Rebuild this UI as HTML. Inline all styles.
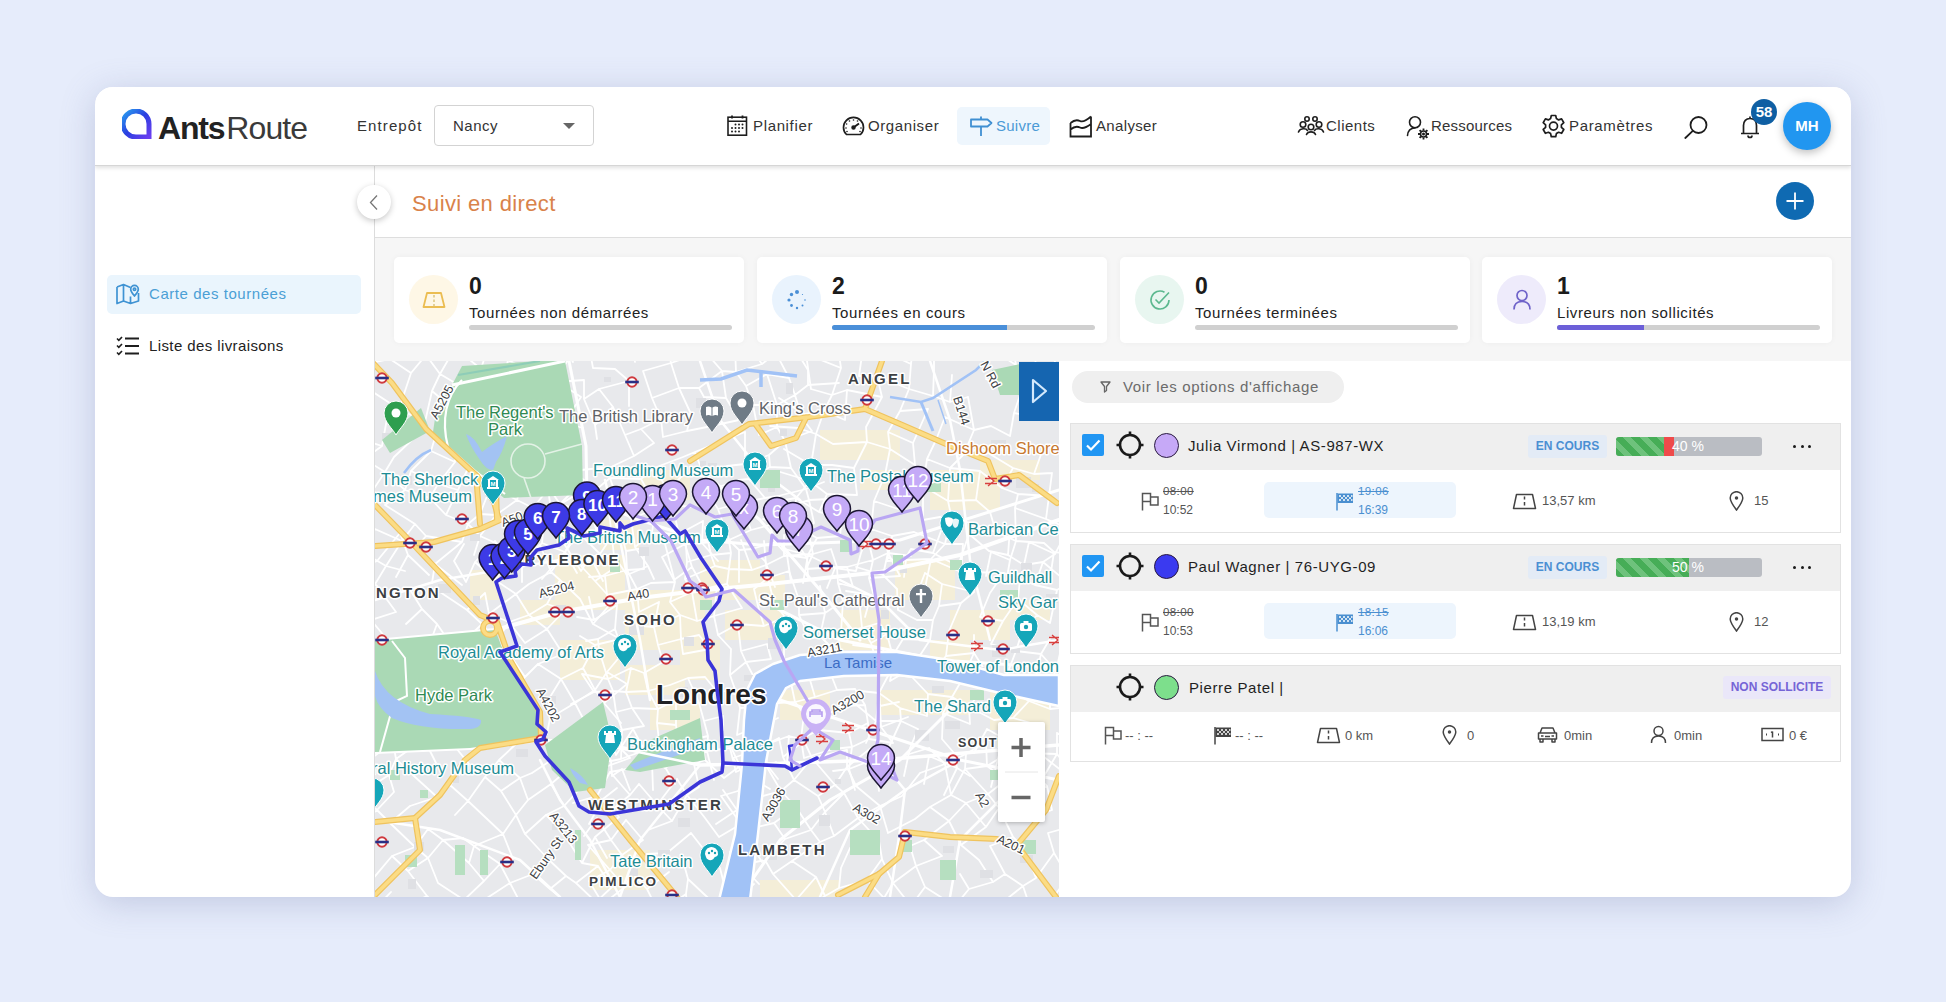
<!DOCTYPE html>
<html><head><meta charset="utf-8">
<style>
*{box-sizing:border-box;margin:0;padding:0}
html,body{width:1946px;height:1002px;overflow:hidden}
body{background:#e6ecfb;font-family:"Liberation Sans",sans-serif;color:#2b2b2b;position:relative}
.a{position:absolute}
.t{position:absolute;white-space:nowrap;line-height:1}
#card{position:absolute;left:95px;top:87px;width:1756px;height:810px;background:#fff;border-radius:18px;box-shadow:0 6px 34px rgba(110,120,170,.30);overflow:hidden}
#hdr{position:absolute;left:0;top:0;width:1756px;height:79px;background:#fff;border-bottom:1px solid #d6d6d6;box-shadow:0 2px 4px rgba(0,0,0,.12);z-index:5}
.nav{font-size:15px;color:#333;letter-spacing:.5px}

.stat{top:170px;width:350px;height:86px;background:#fff;border-radius:5px;box-shadow:0 0 6px rgba(0,0,0,.04)}
.stat .ic{position:absolute;left:15px;top:18px;width:49px;height:49px;border-radius:50%;display:flex;align-items:center;justify-content:center}
.stat .num{position:absolute;left:75px;top:18px;font-size:23px;font-weight:700;color:#1b1b1b;line-height:1}
.stat .lbl{position:absolute;left:75px;top:48px;font-size:15px;color:#222;letter-spacing:.6px;line-height:1;white-space:nowrap}
.stat .bar{position:absolute;left:75px;top:68px;width:263px;height:5px;border-radius:3px;background:#d0d0d0;overflow:hidden}
.stat .bar i{position:absolute;left:0;top:0;height:5px}

.rc{position:absolute;left:975px;width:771px;height:110px;border:1px solid #e2e2e2;background:#fff}
.rh{position:absolute;left:0;top:0;width:769px;height:46px;background:#efefef}
.cb{position:absolute;left:11px;top:10px;width:22px;height:22px;border-radius:2px;background:#2196f3}
.cb svg{display:block}
.dotc{width:25px;height:25px;border-radius:50%;border:1.5px solid #2a1a40}
.rn{font-size:15px;color:#1f1f1f;letter-spacing:.6px}
.badge{position:absolute;height:23px;border-radius:3px;background:#e3ebf6;color:#4a8fd3;font-weight:700;font-size:12px;line-height:23px;text-align:center}
.prog{position:absolute;top:13px;width:146px;height:19px;border-radius:3px;background:#babdc3;overflow:hidden}
.prog i{position:absolute;top:0;height:19px}
.prog i.g{left:0;background:repeating-linear-gradient(45deg,#46ad57 0 6px,#6ec27c 6px 12px)}
.prog span{position:absolute;top:2px;font-size:14px;color:#fff;line-height:15px;white-space:nowrap}
.dots{position:absolute;left:722px;top:21px}
.dots i{float:left;width:3px;height:3px;border-radius:50%;background:#1a1a1a;margin-right:4.5px}
.tm{font-size:12px;color:#555}
.tm.s{font-size:11.5px;text-decoration:line-through;letter-spacing:.4px}
.hl{width:192px;height:36px;background:#edf5fd;border-radius:5px}
.kv{font-size:13px;color:#555}
</style></head><body>
<div id="card">
  <div id="hdr">
    <!-- logo -->
    <svg class="a" style="left:27px;top:22px" width="30" height="30" viewBox="0 0 30 30">
      <defs><linearGradient id="lg" x1="0" y1="0" x2="1" y2="1"><stop offset="0" stop-color="#2aa0f0"/><stop offset=".5" stop-color="#2a3fe0"/><stop offset="1" stop-color="#6a3ef0"/></linearGradient></defs>
      <path d="M14 28 A13 13 0 1 1 27 15 L27 28 Z" fill="none" stroke="url(#lg)" stroke-width="5" stroke-linejoin="miter"/>
    </svg>
    <div class="t" style="left:63px;top:25px;font-size:32px;color:#222"><b style="letter-spacing:-1.2px">Ants</b><span style="letter-spacing:-.9px;margin-left:2px;color:#3a3a3a">Route</span></div>
    <div class="t nav" style="left:262px;top:31px;letter-spacing:1.1px">Entrepôt</div>
    <div class="a" style="left:339px;top:18px;width:160px;height:41px;border:1px solid #d3d3d3;border-radius:4px"></div>
    <div class="t nav" style="left:358px;top:31px">Nancy</div>
    <svg class="a" style="left:468px;top:36px" width="12" height="7"><path d="M0 0H12L6 6Z" fill="#666"/></svg>
    <!-- center nav -->
    <div class="a" style="left:862px;top:20px;width:93px;height:38px;background:#eef6fd;border-radius:5px"></div>
    <div class="t nav" style="left:658px;top:31px;letter-spacing:.65px">Planifier</div>
    <div class="t nav" style="left:773px;top:31px;letter-spacing:.6px">Organiser</div>
    <div class="t nav" style="left:901px;top:31px;color:#4b9ad6;letter-spacing:.25px">Suivre</div>
    <div class="t nav" style="left:1001px;top:31px;letter-spacing:.35px">Analyser</div>
    <div class="t nav" style="left:1231px;top:31px;letter-spacing:.5px">Clients</div>
    <div class="t nav" style="left:1336px;top:31px;letter-spacing:.2px">Ressources</div>
    <div class="t nav" style="left:1474px;top:31px;letter-spacing:.65px">Paramètres</div>

    <!-- header icons -->
    <svg class="a" style="left:632px;top:28px" width="21" height="21" viewBox="0 0 21 21" fill="none" stroke="#1e1e1e" stroke-width="1.6">
      <rect x="1" y="2.2" width="18.5" height="18" />
      <path d="M1 6.2H19.5" /><path d="M5 0.5V3.5M15.5 0.5V3.5" stroke-width="1.8"/>
      <g fill="#1e1e1e" stroke="none"><circle cx="8.5" cy="9.5" r="1"/><circle cx="12" cy="9.5" r="1"/><circle cx="15.5" cy="9.5" r="1"/><circle cx="5" cy="13" r="1"/><circle cx="8.5" cy="13" r="1"/><circle cx="12" cy="13" r="1"/><circle cx="15.5" cy="13" r="1"/><circle cx="5" cy="16.5" r="1"/><circle cx="8.5" cy="16.5" r="1"/><circle cx="12" cy="16.5" r="1"/></g>
    </svg>
    <svg class="a" style="left:747px;top:29px" width="23" height="20" viewBox="0 0 23 20" fill="none" stroke="#1e1e1e" stroke-width="1.7">
      <path d="M4.5 18.5 A10 10 0 1 1 18.5 18.5 Z" stroke-linejoin="round"/>
      <path d="M11.5 11.5 L17 7.5" stroke-width="2"/><circle cx="11.5" cy="11.5" r="1.4" fill="#1e1e1e"/>
      <g fill="#1e1e1e" stroke="none"><circle cx="11.5" cy="4" r=".8"/><circle cx="7.5" cy="5" r=".8"/><circle cx="15.5" cy="5" r=".8"/><circle cx="4.6" cy="8" r=".8"/><circle cx="4" cy="12" r=".8"/><circle cx="19" cy="12" r=".8"/><circle cx="5" cy="15.5" r=".8"/><circle cx="18" cy="15.5" r=".8"/></g>
    </svg>
    <svg class="a" style="left:875px;top:28px" width="23" height="22" viewBox="0 0 23 22" fill="none" stroke="#3f8fd2" stroke-width="1.8">
      <path d="M1 4.5H17.5L21.5 8L17.5 11.5H1Z" stroke-linejoin="round"/><path d="M11 1.5V4.5M11 11.5V21"/>
    </svg>
    <svg class="a" style="left:974px;top:28px" width="24" height="23" viewBox="0 0 24 23" fill="none" stroke="#1e1e1e" stroke-width="1.8">
      <path d="M1.5 8V21.5H22V1.5 M1.5 8 C5 5,8 4.5,11 6 S18 5,22 1.5 M1.5 14.5 C5 11.5,8 11,11 12.5 S18 12,22 9" />
    </svg>
    <svg class="a" style="left:1202px;top:28px" width="28" height="21" viewBox="0 0 28 21" fill="none" stroke="#1e1e1e" stroke-width="1.6">
      <circle cx="10" cy="4" r="2.2"/><circle cx="18" cy="4" r="2.2"/>
      <circle cx="6" cy="9.5" r="2.8"/><circle cx="14" cy="12" r="2.8"/><circle cx="22" cy="9.5" r="2.8"/>
      <path d="M1.5 17 C3 13,9 13,10.5 15.5 M17.5 15.5 C19 13,25 13,26.5 17 M9.5 19.5 C11 16,17 16,18.5 19.5" stroke-linecap="round"/>
    </svg>
    <svg class="a" style="left:1311px;top:28px" width="26" height="27" viewBox="0 0 26 27" fill="none" stroke="#1e1e1e" stroke-width="1.6">
      <circle cx="9" cy="7.3" r="5.5"/><path d="M1.5 20.5 C2 15,5 13,9 13" stroke-linecap="round"/>
      <circle cx="17.5" cy="19" r="3"/><circle cx="17.5" cy="19" r=".7" fill="#1e1e1e"/>
      <path d="M17.5 13.5V15.5M17.5 22.5V24.5M12 19H14M21 19H23M13.6 15.1L15 16.5M20 21.5L21.4 22.9M13.6 22.9L15 21.5M20 16.5L21.4 15.1" stroke-width="1.8"/>
    </svg>
    <svg class="a" style="left:1446px;top:26px" width="25" height="26" viewBox="0 0 25 26" fill="none" stroke="#1e1e1e" stroke-width="1.7">
      <path d="M10.3 1.5H14.7L15.4 4.6L17.6 5.9L20.6 4.9L22.8 8.7L20.4 10.8V13.4L22.8 15.5L20.6 19.3L17.6 18.3L15.4 19.6L14.7 22.7H10.3L9.6 19.6L7.4 18.3L4.4 19.3L2.2 15.5L4.6 13.4V10.8L2.2 8.7L4.4 4.9L7.4 5.9L9.6 4.6Z" stroke-linejoin="round" transform="translate(0,1)"/>
      <circle cx="12.5" cy="13.1" r="4"/>
    </svg>
    <svg class="a" style="left:1589px;top:28px" width="25" height="24" viewBox="0 0 25 24" fill="none" stroke="#1e1e1e" stroke-width="1.8">
      <circle cx="14.5" cy="10" r="8"/><path d="M8.8 15.8L1.3 23" stroke-linecap="round"/>
    </svg>
    <svg class="a" style="left:1645px;top:28px" width="20" height="24" viewBox="0 0 20 24" fill="none" stroke="#1e1e1e" stroke-width="1.7">
      <path d="M3.5 18.5V10.5C3.5 6,6 3.5,10 3.5S16.5 6,16.5 10.5V18.5M1 18.5H19M10 1.5V3.5" stroke-linejoin="round"/><path d="M8 20.5A2 2 0 0 0 12 20.5"/>
    </svg>
    <!-- avatar -->
    <div class="a" style="left:1688px;top:15px;width:48px;height:48px;border-radius:50%;background:#2196f0;box-shadow:0 3px 8px rgba(0,0,0,.25);color:#fff;font-weight:700;font-size:15px;text-align:center;line-height:48px">MH</div>
    <div class="a" style="left:1656px;top:12px;width:26px;height:26px;border-radius:50%;background:#0f5fa3;color:#fff;font-weight:700;font-size:15px;text-align:center;line-height:26px">58</div>
  </div>
  <!-- sidebar -->
  <div class="a" style="left:279px;top:78px;width:1px;height:732px;background:#dcdcdc"></div>
  <div class="a" style="left:12px;top:188px;width:254px;height:39px;background:#eaf5fd;border-radius:5px"></div>
  <div class="t" style="left:54px;top:199px;font-size:15px;color:#4b9fd5;letter-spacing:.55px">Carte des tournées</div>
  <div class="t" style="left:54px;top:251px;font-size:15px;color:#222;letter-spacing:.4px">Liste des livraisons</div>
  <!-- main -->
  <div class="t" style="left:317px;top:106px;font-size:22px;color:#d9824a;letter-spacing:.37px">Suivi en direct</div>
  <div class="a" style="left:280px;top:150px;width:1476px;height:1px;background:#dedede"></div>
  <div class="a" style="left:280px;top:151px;width:1476px;height:123px;background:#f6f6f6"></div>
  <div class="a" style="left:262px;top:98px;width:34px;height:34px;border-radius:50%;background:#fff;box-shadow:0 2px 6px rgba(0,0,0,.22)"></div>
  <div class="a" style="left:1681px;top:95px;width:38px;height:38px;border-radius:50%;background:#0f6ab2"></div>

  <!-- chevron & plus -->
  <svg class="a" style="left:273px;top:107px" width="12" height="17" viewBox="0 0 12 17" fill="none" stroke="#777" stroke-width="1.3"><path d="M9 1.5L2.5 8.5L9 15.5"/></svg>
  <svg class="a" style="left:1691px;top:105px" width="18" height="18" viewBox="0 0 18 18" stroke="#fff" stroke-width="1.8"><path d="M9 0.5V17.5M0.5 9H17.5"/></svg>
  <!-- sidebar icons -->
  <svg class="a" style="left:21px;top:195px" width="24" height="23" viewBox="0 0 24 23" fill="none" stroke="#3f93d3" stroke-width="1.7" stroke-linejoin="round">
    <path d="M1 5L7.5 2.5L14.5 5.5 M14.5 14.5V21.5L7.5 19L1 21.5V5 M7.5 2.5V19 M14.5 21.5L22.5 19V11"/>
    <path d="M18.5 14C16 11,14.7 9.5,14.7 7.2A3.8 3.8 0 0 1 22.3 7.2C22.3 9.5,21 11,18.5 14Z"/><circle cx="18.5" cy="7.2" r="1.2"/>
  </svg>
  <svg class="a" style="left:21px;top:249px" width="24" height="20" viewBox="0 0 24 20" fill="none" stroke="#1e1e1e" stroke-width="1.8">
    <path d="M1 2.5L2.8 4.3L6 1 M1 9.5L2.8 11.3L6 8 M1 16.5L2.8 18.3L6 15" stroke-width="1.6"/>
    <path d="M9 2.5H23M9 10H23M9 17.5H23"/>
  </svg>
  <!-- stat cards -->
  <div class="a stat" style="left:299px"><div class="ic" style="background:#fef7e6"><svg width="26" height="18" viewBox="0 0 26 18" fill="none" stroke="#ebbd52" stroke-width="1.8"><path d="M6 2H20L23.5 16H2.5Z" stroke-linejoin="round"/><path d="M13 4V6.5M13 8.5V11M13 13V15.5" stroke-width="1.4" stroke="#d9c27a"/></svg></div><div class="num">0</div><div class="lbl">Tournées non démarrées</div><div class="bar"></div></div>
  <div class="a stat" style="left:662px"><div class="ic" style="background:#e9f3fd"><svg width="22" height="22" viewBox="0 0 22 22" fill="#4a8fd6"><circle cx="11" cy="3" r="2"/><circle cx="5.5" cy="5.5" r="1.7"/><circle cx="3" cy="11" r="1.6"/><circle cx="5.5" cy="16.5" r="1.4"/><circle cx="11" cy="19" r="1.2"/><circle cx="16.5" cy="16.5" r="1"/><circle cx="19" cy="11" r=".8"/><circle cx="16.5" cy="5.5" r=".6"/></svg></div><div class="num">2</div><div class="lbl">Tournées en cours</div><div class="bar"><i style="width:175px;background:#4a8fd9"></i></div></div>
  <div class="a stat" style="left:1025px"><div class="ic" style="background:#e8f6f0"><svg width="24" height="24" viewBox="0 0 24 24" fill="none" stroke="#5cb88f" stroke-width="1.6"><path d="M21 12A9 9 0 1 1 16.5 4.2"/><path d="M7.5 11.5L11 15L21 4.5"/></svg></div><div class="num">0</div><div class="lbl">Tournées terminées</div><div class="bar"></div></div>
  <div class="a stat" style="left:1387px"><div class="ic" style="background:#eeebfb"><svg width="20" height="22" viewBox="0 0 20 22" fill="none" stroke="#6f63c9" stroke-width="1.7"><circle cx="10" cy="6.5" r="5"/><path d="M2 20.5C2 15,5.5 12.5,10 12.5S18 15,18 20.5"/></svg></div><div class="num">1</div><div class="lbl">Livreurs non sollicités</div><div class="bar"><i style="width:87px;background:#6c5fd8"></i></div></div>

<!-- MAP -->
<svg class="a" style="left:280px;top:274px" width="684" height="536" viewBox="375 361 684 536" font-family="Liberation Sans, sans-serif">
<rect x="375" y="361" width="684" height="536" fill="#e8e9ec"/>
<rect x="555" y="555" width="70" height="55" fill="#f4eed8"/>
<rect x="625" y="590" width="80" height="60" fill="#f4eed8"/>
<rect x="700" y="560" width="60" height="40" fill="#f4eed8"/>
<rect x="560" y="640" width="60" height="40" fill="#f4eed8"/>
<rect x="625" y="665" width="60" height="30" fill="#f4eed8"/>
<rect x="725" y="610" width="60" height="30" fill="#f4eed8"/>
<rect x="820" y="430" width="80" height="30" fill="#f4eed8"/>
<rect x="930" y="470" width="70" height="40" fill="#f4eed8"/>
<rect x="780" y="690" width="50" height="30" fill="#f4eed8"/>
<rect x="880" y="690" width="90" height="25" fill="#f4eed8"/>
<rect x="990" y="690" width="60" height="40" fill="#f4eed8"/>
<rect x="640" y="470" width="50" height="30" fill="#f4eed8"/>
<rect x="895" y="560" width="60" height="40" fill="#f4eed8"/>
<rect x="950" y="610" width="60" height="30" fill="#f4eed8"/>
<rect x="840" y="610" width="50" height="40" fill="#f4eed8"/>
<rect x="590" y="850" width="60" height="40" fill="#f4eed8"/>
<rect x="470" y="570" width="30" height="30" fill="#f4eed8"/>
<rect x="650" y="700" width="50" height="30" fill="#f4eed8"/>
<rect x="980" y="460" width="60" height="20" fill="#f4eed8"/>
<rect x="760" y="880" width="80" height="17" fill="#f4eed8"/>
<rect x="600" y="520" width="40" height="30" fill="#f4eed8"/>
<rect x="680" y="640" width="40" height="40" fill="#f4eed8"/>
<rect x="520" y="600" width="40" height="25" fill="#f4eed8"/>
<rect x="745" y="575" width="40" height="25" fill="#f4eed8"/>
<rect x="930" y="640" width="40" height="25" fill="#f4eed8"/>
<rect x="1000" y="600" width="50" height="20" fill="#f4eed8"/>
<rect x="860" y="470" width="40" height="20" fill="#f4eed8"/>
<clipPath id="mc"><rect x="375" y="361" width="684" height="536"/></clipPath><g clip-path="url(#mc)">
<path d="M341,360L366,376M371,363L390,359M371,363L366,376M366,376L373,392M366,376L348,391M403,348L426,355M403,348L390,359M390,359L411,373M373,392L399,409M373,392L362,410M357,438L382,446M426,355L440,374M426,355L411,373M411,373L399,409M399,409L425,422M399,409L388,413M388,413L382,446M382,446L364,459M364,459L385,472M349,488L373,490M455,348L481,369M455,348L440,374M440,374L467,390M440,374L432,391M432,391L451,407M432,391L425,422M425,422L415,437M415,437L394,457M394,457L385,472M385,472L405,490M385,472L373,490M373,490L353,521M353,521L375,529M488,347L508,360M488,347L481,369M481,369L503,382M467,390L490,407M451,407L475,419M451,407L439,424M439,424L431,451M431,451L455,462M431,451L411,471M411,471L438,484M411,471L405,490M405,490L430,498M405,490L385,505M385,505L415,524M375,529L402,541M375,529L364,553M364,553L386,566M525,342L508,360M508,360L528,370M508,360L503,382M503,382L525,385M503,382L490,407M490,407L475,419M475,419L456,440M456,440L483,446M456,440L455,462M455,462L438,484M438,484L458,490M438,484L430,498M430,498L446,515M415,524L426,536M415,524L402,541M402,541L415,549M402,541L386,566M386,566L405,571M386,566L374,586M528,370L555,380M528,370L525,385M525,385L538,409M525,385L510,407M493,423L519,447M493,423L483,446M483,446L504,458M470,464L491,486M470,464L458,490M458,490L446,515M446,515L468,524M426,536L462,542M426,536L415,549M415,549L435,564M570,357L555,380M555,380L581,397M555,380L538,409M538,409L564,423M533,424L552,433M519,447L542,459M519,447L504,458M504,458L524,473M504,458L491,486M491,486L517,500M491,486L480,514M480,514L496,515M480,514L468,524M468,524L480,536M468,524L462,542M462,542L435,564M435,564L462,585M435,564L432,583M581,397L564,423M564,423L583,428M564,423L552,433M552,433L570,450M552,433L542,459M542,459L524,473M524,473L517,500M517,500L533,508M517,500L496,515M496,515L516,529M496,515L480,536M480,536L507,548M480,536L474,555M570,450L563,466M563,466L584,480M549,488L560,504M549,488L533,508M533,508L544,523M533,508L516,529M507,548L522,565M507,548L496,574M584,480L560,504M560,504L591,513M560,504L544,523M544,523L571,541M544,523L542,543M542,543L565,552M542,543L522,565M522,565L522,582M571,541L565,552M565,552L577,573M565,552L542,579" fill="none" stroke="#fff" stroke-width="1.8" stroke-linecap="round"/>
<path d="M533,518L551,510M540,532L559,520M530,450L559,437M547,482L569,476M547,482L551,510M551,510L577,494M551,510L559,520M559,520L584,520M563,542L589,536M563,542L581,571M581,571L590,556M522,373L555,367M535,394L557,382M546,412L567,412M546,412L559,437M559,437L565,456M565,456L569,476M569,476L581,470M569,476L577,494M577,494L592,493M584,520L589,536M589,536L611,529M590,556L614,556M590,556L603,581M548,345L555,367M555,367L557,382M557,382L584,380M567,412L571,435M571,435L580,447M580,447L581,470M581,470L611,467M592,493L610,478M592,493L609,513M609,513L611,529M611,529L614,556M614,556L627,575M627,575L648,566M557,333L573,362M584,380L584,399M584,399L599,389M584,399L595,425M595,425L613,407M595,425L597,439M611,467L634,456M610,478L641,479M610,478L619,505M619,505L650,495M619,505L631,519M631,519L655,509M631,519L635,547M635,547L652,533M635,547L648,566M648,566L654,579M589,346L593,368M593,368L615,369M599,389L629,381M599,389L613,407M613,407L625,435M625,435L641,429M625,435L634,456M634,456L654,443M641,479L654,468M641,479L650,495M650,495L668,490M655,509L672,505M655,509L652,533M652,533L679,534M662,557L685,544M662,557L674,580M674,580L692,567M615,369L629,381M629,381L629,406M641,429L661,419M641,429L654,443M654,468L683,457M654,468L668,490M668,490L683,475M668,490L672,505M672,505L692,507M672,505L679,534M679,534L703,521M679,534L685,544M685,544L702,543M685,544L692,567M692,567L702,585M632,340L635,362M643,371L671,363M643,371L652,398M652,398L679,388M652,398L661,419M661,419L691,414M661,419L663,437M663,437L687,431M683,457L695,452M683,475L704,476M703,521L702,543M702,543L729,540M702,543L718,561M668,349L671,363M671,363L691,356M671,363L679,388M679,388L699,388M679,388L691,414M691,414L687,431M687,431L707,427M695,452L717,443M695,452L704,476M704,476L727,466M704,476L707,491M707,491L739,480M707,491L718,509M718,509L741,503M718,509L729,540M729,540L751,530M729,540L739,550M739,550L752,549M739,550L739,582M691,356L709,356M699,388L722,371M699,388L704,397M704,397L726,398M704,397L707,427M707,427L739,420M717,443L745,432M727,466L745,464M739,480L749,479M739,480L741,503M741,503L765,498M741,503L751,530M751,530L770,525M752,549L775,542M752,549L765,561M765,561L775,587M695,333L709,356M709,356L735,348M709,356L722,371M722,371L736,372M722,371L726,398M726,398L739,420M739,420L753,405M745,432L745,464M745,464L769,455M745,464L749,479M749,479L770,467M749,479L765,498M765,498L778,496M770,525L789,506M770,525L775,542M775,542L794,539M775,542L787,555M787,555L807,558M787,555L791,582M735,348L736,372M736,372L762,364M736,372L746,386M746,386L767,374M746,386L753,405M753,405L777,405M753,405L759,435M759,435L777,427M769,455L785,441M769,455L770,467M770,467L791,468M778,496L806,489M778,496L789,506M789,506L809,500M789,506L794,539M794,539L814,523M794,539L807,558M807,558L808,577M745,340L762,364M762,364L776,353M767,374L789,378M767,374L777,405M777,405L795,395M777,405L777,427M777,427L785,441M785,441L812,431M785,441L791,468M791,468L806,489M806,489L824,482M806,489L809,500M809,500L829,499M809,500L814,523M775,325L776,353M776,353L795,349M776,353L789,378M789,378L795,395M795,395L808,385M795,395L802,418M802,418L820,414M802,418L812,431M795,349L808,370M808,370L808,385M808,385L839,383" fill="none" stroke="#fff" stroke-width="1.8" stroke-linecap="round"/>
<path d="M788,352L806,354M779,398L804,414M770,426L798,428M815,333L806,354M806,354L841,368M806,354L811,389M811,389L832,395M804,414L824,411M798,428L816,434M784,449L811,465M777,471L810,481M779,501L796,498M763,519L795,526M837,341L862,355M837,341L841,368M841,368L832,395M832,395L847,390M832,395L824,411M824,411L845,420M824,411L816,434M816,434L833,444M816,434L811,465M811,465L832,465M811,465L810,481M810,481L827,494M810,481L796,498M796,498L819,512M796,498L795,526M795,526L817,538M781,548L808,555M872,330L862,355M862,355L859,376M859,376L877,376M847,390L882,397M847,390L845,420M833,444L867,442M832,465L854,468M827,494L857,495M827,494L819,512M819,512L842,517M817,538L840,536M817,538L808,555M808,555L835,568M808,555L803,583M881,350L911,364M877,376L909,389M877,376L882,397M882,397L866,427M866,427L867,442M867,442L890,449M867,442L854,468M854,468L857,495M842,517L871,529M842,517L840,536M835,568L856,571M835,568L827,588M914,339L911,364M911,364L909,389M909,389L933,396M909,389L900,411M900,411L928,409M900,411L888,432M888,432L913,443M888,432L890,449M890,449L915,465M890,449L885,475M885,475L900,487M885,475L874,501M874,501L898,509M874,501L871,529M871,529L892,536M871,529L861,553M861,553L856,571M934,343L959,354M934,343L934,370M934,370L933,396M933,396L950,402M928,409L913,443M913,443L915,465M900,487L923,486M900,487L898,509M892,536L914,532M892,536L887,561M887,561L906,560M975,325L959,354M959,354L994,351M952,375L950,402M950,402L968,397M945,417L974,430M945,417L936,440M936,440L964,454M936,440L927,459M927,459L950,468M927,459L923,486M923,486L948,501M923,486L923,520M923,520L951,515M914,532L945,544M906,560L931,559M906,560L904,577M998,331L994,351M994,351L1016,365M986,379L1003,388M968,397L974,430M974,430L991,426M974,430L964,454M964,454L980,448M964,454L950,468M950,468L980,471M950,468L948,501M948,501L976,500M948,501L951,515M951,515L964,521M951,515L945,544M945,544L963,544M945,544L931,559M931,559L961,572M931,559L925,588M1010,333L1016,365M1016,365L1037,370M1003,388L1023,386M991,426L1010,436M980,448L1013,468M980,471L1002,488M980,471L976,500M976,500L990,512M964,521L996,532M963,544L961,572M1032,342L1037,370M1037,370L1052,369M1037,370L1023,386M1023,386L1050,395M1023,386L1014,413M1014,413L1041,418M1014,413L1010,436M1013,468L1034,474M1013,468L1002,488M1002,488L1018,494M990,512L996,532M996,532L1016,541M991,552L1010,560M991,552L986,576M1060,348L1052,369M1052,369L1083,387M1052,369L1050,395M1044,446L1060,446M1044,446L1034,474M1034,474L1052,473M1018,494L1049,496M1018,494L1015,508M1015,508L1046,519M1015,508L1016,541M1016,541L1044,543M1016,541L1010,560M1010,560L1006,583M1083,387L1067,401M1067,401L1097,415M1067,401L1063,427M1063,427L1060,446M1052,473L1049,496M1049,496L1068,506M1049,496L1046,519M1046,519L1067,528M1044,543L1054,552M1079,481L1068,506M1068,506L1089,513M1068,506L1067,528M1067,528L1089,535M1054,552L1084,556M1054,552L1051,572" fill="none" stroke="#fff" stroke-width="1.8" stroke-linecap="round"/>
<path d="M400,533L408,555M400,533L377,561M377,561L357,568M357,568L377,586M408,555L429,575M408,555L396,577M377,586L396,612M464,544L454,561M454,561L466,582M409,588L422,609M396,612L371,620M371,620L391,644M371,620L360,637M360,637L377,656M495,541L509,562M495,541L475,562M475,562L495,580M475,562L466,582M440,592L467,610M422,609L437,624M422,609L406,624M391,644L403,658M377,656L353,666M353,666L380,691M540,545L551,572M540,545L509,562M509,562L495,580M495,580L516,594M485,593L489,614M485,593L467,610M467,610L482,624M437,624L455,650M437,624L430,643M430,643L442,661M403,658L421,676M403,658L388,670M380,691L387,715M380,691L353,713M579,533L600,554M579,533L565,552M565,552L551,572M551,572L560,580M551,572L529,584M529,584L516,594M516,594L529,615M516,594L489,614M489,614L509,622M482,624L497,641M482,624L455,650M455,650L466,661M455,650L442,661M442,661L458,680M442,661L421,676M421,676L437,699M406,692L423,710M406,692L387,715M387,715L397,728M387,715L369,728M369,728L393,742M618,527L600,554M600,554L581,566M581,566L595,581M560,580L580,599M560,580L547,604M547,604L565,610M547,604L529,615M529,615L547,629M529,615L509,622M509,622L525,643M509,622L497,641M497,641L510,655M466,661L500,681M458,680L437,699M437,699L452,707M437,699L423,710M423,710L397,728M397,728L424,739M397,728L393,742M393,742L396,759M393,742L368,761M368,761L389,775M613,569L595,581M595,581L613,601M580,599L593,624M565,610L547,629M547,629L563,654M547,629L525,643M510,655L525,677M500,681L506,696M452,707L475,734M452,707L441,723M441,723L452,743M424,739L436,763M424,739L396,759M396,759L415,777M396,759L389,775M389,775L394,792M389,775L359,794M359,794L377,810M613,601L593,624M593,624L620,639M580,636L595,645M563,654L538,664M538,664L561,679M538,664L525,677M525,677L506,696M506,696L519,714M506,696L486,707M486,707L511,729M475,734L487,749M452,743L469,764M415,777L437,797M394,792L377,810M377,810L390,823M377,810L359,824M620,639L595,645M595,645L583,668M583,668L595,690M583,668L561,679M561,679L575,703M561,679L547,702M547,702L550,718M519,714L511,729M511,729L516,744M511,729L487,749M469,764L450,785M450,785L468,801M450,785L437,797M437,797L410,806M410,806L390,823M390,823L415,847M361,864L371,881M622,654L607,672M607,672L627,684M607,672L595,690M595,690L604,703M595,690L575,703M575,703L587,726M575,703L550,718M550,718L547,734M516,744L499,760M499,760L520,778M499,760L485,777M485,777L501,791M485,777L468,801M468,801L485,817M468,801L455,815M428,829L443,840M428,829L415,847M415,847L428,858M415,847L392,856M392,856L408,871M392,856L371,881M627,684L604,703M604,703L621,723M587,726L609,737M587,726L573,737M573,737L592,749M573,737L562,753M562,753L532,773M532,773L520,778M520,778L528,800M520,778L501,791M501,791L516,815M485,817L503,834M463,838L474,846M463,838L443,840M443,840L469,863M443,840L428,858M428,858L438,883M428,858L408,871M408,871L427,896M391,892L369,915M609,737L630,758M609,737L592,749M592,749L605,767M592,749L565,772M565,772L588,780M565,772L551,784M551,784L564,806M551,784L528,800M528,800L516,815M516,815L525,834M516,815L503,834M503,834L513,859M503,834L474,846M474,846L500,864M474,846L469,863M469,863L484,881M438,883L464,900M427,896L448,917M427,896L406,906M406,906L426,933M630,758L605,767M588,780L564,806M564,806L546,815M546,815L564,834M546,815L525,834M525,834L548,859M500,864L510,883M500,864L484,881M484,881L464,900M617,788L603,799M603,799L619,817M603,799L589,824M564,834L582,863M548,859L566,876M548,859L533,874M533,874L550,889M533,874L510,883M510,883L522,906M510,883L487,898M487,898L506,918M487,898L474,924M619,817L595,837M595,837L607,858M595,837L582,863M582,863L598,866M566,876L576,883M566,876L550,889M550,889L560,897M598,866L612,887M598,866L576,883M576,883L596,902M560,897L582,925M612,887L596,902M596,902L582,925" fill="none" stroke="#fff" stroke-width="1.8" stroke-linecap="round"/>
<path d="M571,704L594,692M584,760L611,761M577,617L594,620M586,641L598,639M583,653L599,650M582,674L608,679M582,674L594,692M594,692L613,691M596,718L599,735M599,735L622,730M599,735L611,761M611,761L621,759M611,761L612,776M612,776L622,769M589,577L605,576M589,597L594,620M594,620L617,605M598,639L615,629M598,639L599,650M599,650L608,679M608,679L631,668M608,679L613,691M613,691L626,692M613,691L616,712M616,712L632,708M616,712L622,730M622,730L644,726M622,730L621,759M621,759L643,751M622,769L630,790M605,576L627,570M605,576L607,595M607,595L637,589M617,605L615,629M615,629L624,655M631,668L644,673M631,668L626,692M626,692L648,691M626,692L632,708M632,708L658,709M632,708L644,726M643,751L652,762M652,762L653,790M619,525L626,551M626,551L644,548M626,551L627,570M627,570L644,569M627,570L637,589M637,589L651,583M637,589L639,612M639,612L659,602M642,626L654,627M644,673L663,662M644,673L648,691M648,691L670,685M648,691L658,709M658,709L676,700M658,709L657,723M657,723L676,725M657,723L659,741M659,741L678,743M659,741L662,762M662,762L690,761M662,762L675,784M644,548L644,569M651,583L675,582M659,602L654,627M654,627L680,615M654,627L658,645M658,645L681,639M658,645L663,662M670,685L688,678M676,700L699,703M676,700L676,725M676,725L678,743M678,743L708,736M690,761L707,751M664,540L670,563M670,563L675,582M675,582L670,602M670,602L692,592M670,602L680,615M680,615L697,621M680,615L681,639M681,639L699,635M681,639L683,654M683,654L710,649M688,678L705,677M688,678L699,703M699,703L704,721M704,721L723,716M704,721L708,736M708,736L707,751M707,751L730,748M707,751L714,780M685,530L687,562M687,562L711,555M687,562L685,579M685,579L715,566M685,579L692,592M692,592L717,586M692,592L697,621M697,621L714,616M699,635L710,649M705,677L714,688M714,688L737,695M723,716L723,730M730,748L748,744M730,748L736,772M736,772L751,765M705,527L711,555M711,555L731,553M711,555L715,566M715,566L729,569M717,586L727,584M717,586L714,616M714,616L742,608M714,616L718,635M718,635L738,624M718,635L731,649M731,649L730,675M730,675L746,662M730,675L737,695M737,695L757,683M737,695L740,708M740,708L754,707M740,708L737,735M737,735L760,726M748,744L765,745M748,744L751,765M751,765L767,765M726,524L731,553M731,553L729,569M729,569L752,570M729,569L727,584M727,584L742,608M738,624L764,626M738,624L741,651M741,651L767,644M741,651L746,662M746,662L771,659M746,662L757,683M754,707L777,703M760,726L778,718M765,745L789,736M765,745L767,765M767,765L787,762M767,765L778,779M741,540L752,570M752,570L766,565M754,589L768,578M754,589L758,606M758,606L764,626M764,626L785,617M767,644L771,659M777,703L795,702M789,736L801,739M789,736L787,762M764,541L766,565M766,565L784,556M766,565L768,578M768,578L789,571M768,578L774,603M774,603L799,600M774,603L785,617M785,617L784,644M784,644L784,662M784,662L791,683M791,683L808,673M791,683L795,702M795,702L815,697M795,702L804,714M804,714L824,716M804,714L801,739M801,739L819,730M801,739L804,758M804,758L833,749M784,535L784,556M784,556L813,554M789,571L799,600M799,600L799,615M799,615L825,613M799,615L810,639M810,639L820,636M814,656L830,646M814,656L808,673M808,673L830,672M808,673L815,697M815,697L837,690M824,716L843,706M819,730L849,733M833,749L852,747M833,771L849,769M809,535L813,554M813,554L831,549M813,554L806,569M806,569L837,567M820,586L825,613M825,613L843,601M825,613L820,636M820,636L841,633M820,636L830,646M830,646L830,672M830,672L856,660M830,672L837,690M837,690L855,689M843,706L865,705M849,733L868,723M849,733L852,747M852,747L869,739M852,747L849,769M849,769L872,760M849,769L855,790M831,549L837,567M837,567L847,567M837,567L838,583M838,583L853,587M838,583L843,601M843,601L859,598M843,601L841,633M841,633L862,628M843,653L856,660M856,660L878,667M855,689L865,705M865,705L868,723M868,723L869,739M869,739L893,743M872,760L897,761M872,760L877,780M847,567L873,560M847,567L853,587M859,598L875,600M859,598L862,628M862,628L879,623M862,628L871,643M871,643L887,634M871,643L878,667M878,667L894,661M879,685L880,706M880,706L899,702M880,706L881,727M881,727L908,717M881,727L893,743M868,539L873,560M873,560L888,553M873,560L869,578M869,578L900,576M869,578L875,600M879,623L887,634M887,634L910,628M887,634L894,661M894,661L890,681M890,681L912,668M885,539L888,553M888,553L911,556M888,553L900,576" fill="none" stroke="#fff" stroke-width="1.8" stroke-linecap="round"/>
<path d="M856,567L883,575M846,591L871,595M892,536L887,557M887,557L902,564M887,557L883,575M883,575L897,589M871,595L865,617M853,645L884,649M911,549L933,553M911,549L902,564M897,589L898,610M898,610L917,620M884,649L877,664M877,664L889,674M860,691L879,693M853,702L876,721M941,531L933,553M933,553L958,566M925,573L942,584M925,573L917,594M917,620L933,620M903,639L930,640M903,639L895,652M895,652L915,663M889,674L912,677M889,674L879,693M879,693L900,708M879,693L876,721M876,721L901,721M876,721L866,743M862,762L876,769M969,534L989,551M969,534L958,566M958,566L971,572M942,584L974,592M942,584L939,606M939,606L961,603M939,606L933,620M933,620L930,640M930,640L915,663M915,663L912,677M912,677L928,694M900,708L927,716M900,708L901,721M901,721L918,729M901,721L889,747M876,769L879,791M989,551L1008,555M971,572L1004,573M971,572L974,592M974,592L961,603M961,603L949,631M949,631L946,656M946,656L974,653M946,656L937,667M937,667L963,678M928,694L952,697M928,694L927,716M918,729L910,748M910,748L904,776M1010,528L1008,555M1008,555L1024,565M1004,573L1020,579M1004,573L990,593M990,593L980,617M980,617L1003,621M974,635L974,653M974,653L984,669M974,653L963,678M963,678L988,682M963,678L952,697M952,697L969,707M952,697L943,713M943,713L970,724M943,713L942,739M942,739L954,753M929,756L957,768M929,756L924,784M1029,542L1055,554M1029,542L1024,565M1024,565L1043,562M1024,565L1020,579M1020,579L1035,585M1020,579L1018,599M1018,599L1037,615M1018,599L1003,621M1003,621L991,644M991,644L1016,651M984,669L1006,677M984,669L988,682M988,682L1007,689M988,682L969,707M969,707L994,720M969,707L970,724M954,753L974,753M954,753L957,768M957,768L970,776M957,768L944,795M1067,531L1055,554M1055,554L1043,562M1043,562L1068,583M1043,562L1035,585M1035,585L1057,590M1037,615L1050,623M1037,615L1022,632M1022,632L1016,651M1016,651L1041,654M1016,651L1006,677M1007,689L1029,701M994,720L1013,718M987,729L1003,738M987,729L974,753M1068,583L1089,584M1068,583L1057,590M1057,590L1050,623M1051,637L1041,654M1041,654L1056,671M1041,654L1036,676M1029,701L1050,709M1029,701L1013,718M1013,718L1031,723M1003,738L1025,753M1003,738L999,755M999,755L991,787M1077,632L1061,649M1061,649L1082,657M1061,649L1056,671M1056,671L1050,681M1050,681L1075,691M1050,681L1050,709M1050,709L1060,708M1031,723L1025,753M1025,753L1057,754M1025,753L1027,769M1027,769L1044,776M1027,769L1010,784M1075,691L1060,708M1060,708L1082,723M1057,733L1080,744M1057,733L1057,754M1057,754L1069,769M1057,754L1044,776M1080,744L1069,769M1069,769L1064,785" fill="none" stroke="#fff" stroke-width="1.8" stroke-linecap="round"/>
<path d="M714,915L739,896M729,884L739,896M754,923L776,901M716,824L737,810M730,852L741,865M741,865L765,860M741,865L759,884M776,901L796,900M776,901L781,928M723,790L737,810M737,810L753,828M753,828L774,823M765,860L785,839M765,860L773,874M773,874L792,861M773,874L796,900M796,900L816,877M796,900L809,906M809,906L825,896M733,758L754,751M733,758L746,779M746,779L764,762M752,799L781,791M774,823L796,807M774,823L785,839M785,839L811,830M792,861L820,842M792,861L816,877M816,877L825,896M825,896L839,888M746,731L754,751M754,751L779,738M764,762L781,791M781,791L794,780M781,791L796,807M796,807L811,830M811,830L825,812M811,830L820,842M820,842L834,836M841,868L850,848M841,868L839,888M839,888L867,880M855,911L884,898M779,738L783,757M783,757L804,741M783,757L794,780M794,780L812,758M794,780L818,796M818,796L835,785M818,796L825,812M825,812L844,793M825,812L834,836M834,836L858,818M850,848L879,841M867,880L882,859M867,880L884,898M884,898L893,883M884,898L888,917M888,917L911,906M804,741L812,758M812,758L847,750M812,758L835,785M835,785L847,767M835,785L844,793M844,793L858,818M858,818L880,806M858,818L879,841M879,841L882,859M882,859L893,883M893,883L916,866M893,883L911,906M911,906L925,887M911,906L926,920M926,920L955,906M847,750L847,767M847,767L871,748M847,767L856,786M856,786L880,806M880,806L902,796M880,806L888,833M888,833L915,819M910,846L924,840M910,846L916,866M916,866L942,856M916,866L925,887M925,887L955,906M955,906L969,889M955,906L958,933M902,796L920,773M915,819L930,807M924,840L949,821M924,840L942,856M960,874L969,889M969,889L993,882M906,755L929,748M920,773L945,764M930,807L951,795M930,807L949,821M949,821L966,803M949,821L961,845M961,845L986,827M961,845L979,860M979,860L993,882M993,882L1005,874M998,906L1023,886M929,748L945,764M945,764L966,754M945,764L951,795M951,795L965,769M951,795L966,803M966,803L988,794M966,803L986,827M986,827L999,808M990,846L1013,837M990,846L1005,874M1005,874L1023,886M1023,886L1036,878M1023,886L1031,910M1031,910L1053,898M966,754L986,742M966,754L965,769M965,769L987,766M965,769L988,794M988,794L1006,780M988,794L999,808M999,808L1014,800M999,808L1013,837M1013,837L1025,849M1025,849L1036,878M1036,878L1054,853M1053,898L1068,877M1053,898L1069,908M986,742L987,766M987,766L1013,750M987,766L1006,780M1006,780L1021,759M1006,780L1014,800M1014,800L1047,786M1030,818L1052,810M1048,833L1062,829M1048,833L1054,853M1054,853L1068,877M1068,877L1093,857M1013,750L1021,759M1021,759L1039,753M1021,759L1047,786M1047,786L1052,810M1062,829L1081,814M1062,829L1079,842M1034,733L1039,753M1039,753L1062,771" fill="none" stroke="#fff" stroke-width="1.8" stroke-linecap="round"/>
<path d="M606,724L616,755M586,741L601,756M633,729L646,753M633,729L616,755M601,756L589,773M668,738L646,753M646,753L665,768M646,753L633,768M633,768L610,772M610,772L630,795M610,772L597,796M597,796L613,809M597,796L573,803M702,742L705,760M687,754L694,764M687,754L665,768M639,784L657,805M639,784L630,795M630,795L613,809M597,818L611,840M597,818L584,836M726,737L740,766M705,760L724,778M705,760L694,764M694,764L699,787M677,779L687,795M677,779L657,805M657,805L672,821M626,820L643,840M626,820L611,840M611,840L622,855M611,840L588,845M588,845L610,870M761,752L740,766M740,766L724,778M699,787L687,795M687,795L705,818M687,795L672,821M672,821L648,830M643,840L622,855M622,855L632,873M622,855L610,870M610,870L625,887M610,870L589,881M589,881L603,904M776,762L748,776M748,776L770,789M748,776L738,791M738,791L751,799M738,791L721,796M721,796L741,824M705,818L719,837M691,833L705,851M691,833L667,853M667,853L647,854M647,854L632,873M632,873L647,889M632,873L625,887M625,887L603,904M741,824L719,837M682,857L688,879M669,872L647,889M647,889L659,913M750,843L762,862M732,848L751,872M720,868L723,880M688,879L705,895M688,879L686,894M686,894L688,916M686,894L659,913M751,872L723,880M705,895L722,910M754,884L734,901M734,901L722,910" fill="none" stroke="#fff" stroke-width="1.8" stroke-linecap="round"/>
</g>
<rect x="700" y="461" width="6" height="11" fill="#dfe0e4"/>
<rect x="763" y="669" width="10" height="10" fill="#dfe0e4"/>
<rect x="915" y="730" width="14" height="11" fill="#dfe0e4"/>
<rect x="943" y="846" width="11" height="7" fill="#dfe0e4"/>
<rect x="900" y="567" width="7" height="6" fill="#dfe0e4"/>
<rect x="1008" y="379" width="15" height="8" fill="#dfe0e4"/>
<rect x="1021" y="563" width="11" height="8" fill="#dfe0e4"/>
<rect x="546" y="696" width="10" height="8" fill="#dfe0e4"/>
<rect x="453" y="773" width="6" height="10" fill="#dfe0e4"/>
<rect x="544" y="379" width="11" height="11" fill="#dfe0e4"/>
<rect x="696" y="398" width="10" height="10" fill="#dfe0e4"/>
<rect x="1058" y="408" width="12" height="6" fill="#dfe0e4"/>
<rect x="678" y="818" width="12" height="9" fill="#dfe0e4"/>
<rect x="647" y="740" width="12" height="9" fill="#dfe0e4"/>
<rect x="1011" y="646" width="9" height="7" fill="#dfe0e4"/>
<rect x="642" y="857" width="10" height="5" fill="#dfe0e4"/>
<rect x="1006" y="772" width="15" height="10" fill="#dfe0e4"/>
<rect x="991" y="440" width="15" height="5" fill="#dfe0e4"/>
<rect x="1032" y="484" width="7" height="8" fill="#dfe0e4"/>
<rect x="819" y="815" width="11" height="11" fill="#dfe0e4"/>
<rect x="546" y="381" width="9" height="7" fill="#dfe0e4"/>
<rect x="763" y="851" width="14" height="9" fill="#dfe0e4"/>
<rect x="427" y="682" width="13" height="10" fill="#dfe0e4"/>
<rect x="400" y="476" width="12" height="9" fill="#dfe0e4"/>
<rect x="1020" y="855" width="13" height="8" fill="#dfe0e4"/>
<rect x="881" y="610" width="8" height="9" fill="#dfe0e4"/>
<rect x="768" y="484" width="7" height="8" fill="#dfe0e4"/>
<rect x="835" y="779" width="6" height="5" fill="#dfe0e4"/>
<rect x="470" y="534" width="10" height="7" fill="#dfe0e4"/>
<rect x="516" y="749" width="12" height="8" fill="#dfe0e4"/>
<rect x="684" y="637" width="10" height="9" fill="#dfe0e4"/>
<rect x="604" y="377" width="7" height="5" fill="#dfe0e4"/>
<rect x="932" y="686" width="12" height="7" fill="#dfe0e4"/>
<rect x="744" y="675" width="9" height="6" fill="#dfe0e4"/>
<rect x="438" y="584" width="13" height="9" fill="#dfe0e4"/>
<rect x="473" y="596" width="7" height="9" fill="#dfe0e4"/>
<rect x="1046" y="594" width="12" height="9" fill="#dfe0e4"/>
<rect x="556" y="605" width="10" height="7" fill="#dfe0e4"/>
<rect x="679" y="687" width="9" height="10" fill="#dfe0e4"/>
<rect x="992" y="645" width="14" height="12" fill="#dfe0e4"/>
<rect x="945" y="721" width="15" height="8" fill="#dfe0e4"/>
<rect x="441" y="418" width="16" height="7" fill="#dfe0e4"/>
<rect x="537" y="432" width="8" height="6" fill="#dfe0e4"/>
<rect x="768" y="638" width="14" height="11" fill="#dfe0e4"/>
<rect x="639" y="547" width="10" height="9" fill="#dfe0e4"/>
<rect x="658" y="850" width="12" height="7" fill="#dfe0e4"/>
<rect x="980" y="667" width="11" height="6" fill="#dfe0e4"/>
<rect x="629" y="624" width="15" height="11" fill="#dfe0e4"/>
<rect x="382" y="433" width="9" height="7" fill="#dfe0e4"/>
<rect x="552" y="824" width="15" height="6" fill="#dfe0e4"/>
<rect x="486" y="491" width="8" height="6" fill="#dfe0e4"/>
<rect x="414" y="842" width="10" height="9" fill="#dfe0e4"/>
<rect x="980" y="870" width="13" height="8" fill="#dfe0e4"/>
<rect x="708" y="463" width="9" height="12" fill="#dfe0e4"/>
<rect x="408" y="879" width="8" height="10" fill="#dfe0e4"/>
<rect x="628" y="867" width="10" height="9" fill="#dfe0e4"/>
<rect x="491" y="635" width="8" height="10" fill="#dfe0e4"/>
<rect x="786" y="383" width="7" height="11" fill="#dfe0e4"/>
<rect x="780" y="429" width="7" height="7" fill="#dfe0e4"/>
<rect x="1016" y="477" width="15" height="11" fill="#dfe0e4"/>
<!-- main white roads -->
<g fill="none" stroke="#fff" stroke-linecap="round" stroke-linejoin="round">
<path d="M375,641 L495,630 L560,612 L640,598 L705,590 L760,585 L880,572 L960,555 L1059,520" stroke-width="4"/>
<path d="M540,740 L610,745 L700,765 L760,764 L880,760 L1059,745" stroke-width="3.5"/>
<path d="M375,752 L470,748 L540,740" stroke-width="4"/>
<path d="M700,470 L760,520 L820,590 L860,640" stroke-width="3"/>
<path d="M580,497 L640,520 L700,540 L760,545 L900,540 L1059,490" stroke-width="3"/>
<path d="M605,480 L620,540 L640,640 L650,700" stroke-width="2.5"/>
<path d="M760,600 L840,640 L940,660 L1059,668" stroke-width="3"/>
<path d="M780,700 L840,720 L900,740 L960,760 L1059,780" stroke-width="3"/>
<path d="M740,897 L780,840 L830,800 L900,760 L960,700" stroke-width="3"/>
<path d="M820,897 L850,830 L905,790 L960,760" stroke-width="2.5"/>
<path d="M890,897 L900,830 L905,790 L880,760" stroke-width="2.5"/>
<path d="M620,897 L640,840 L680,790 L700,765" stroke-width="2.5"/>
<path d="M375,600 L440,580 L500,570 L560,560" stroke-width="2.5"/>
<path d="M587,497 L600,540" stroke-width="3"/>
<path d="M700,361 L720,420 L760,470 L800,500" stroke-width="2.5"/>
<path d="M930,361 L950,420 L960,470 L970,560 L990,640" stroke-width="2.5"/>
<path d="M840,580 L880,600 L920,640 L1000,650 L1059,640" stroke-width="2.5"/>
<path d="M375,820 L440,830 L520,860 L560,897" stroke-width="2.5"/>
<path d="M540,760 L560,800 L590,840 L620,897" stroke-width="2.5"/>
<path d="M950,897 L960,840 L1000,800 L1040,760" stroke-width="2.5"/>
</g>
<!-- Regent's Park -->
<path d="M452,385 L462,366 L540,361 L565,361 Z" fill="#aad9b5"/>
<path d="M433,432 L437,405 L452,385 L565,361 L582,446 L583,495 L504,498 L470,470 L446,449 Z" fill="#aad9b5"/>
<path d="M569,361 L586,446 L587,497" fill="none" stroke="#fff" stroke-width="3"/>
<path d="M452,385 L565,361" fill="none" stroke="#fff" stroke-width="3"/>
<path d="M458,375 L540,361" fill="none" stroke="#8ecdb8" stroke-width="2"/>
<path d="M462,380 C446,396 441,420 448,447 L474,470 L505,494" fill="none" stroke="#fff" stroke-width="2.2"/>
<circle cx="528" cy="461" r="17" fill="none" stroke="#e3f2e6" stroke-width="1.6"/>
<path d="M545,454 L582,444 M524,478 L531,498" fill="none" stroke="#e3f2e6" stroke-width="1.6"/>
<path d="M466,434 Q474,436 482,452 Q492,444 507,436 Q503,452 496,462 L493,470 Q486,470 480,460 Q470,446 466,434 Z" fill="#a3c3f3"/>
<path d="M382,440 L421,408 L430,431 L390,453 Z" fill="#aad9b5"/>
<!-- small greens -->
<g fill="#b6dfc0">
<rect x="610" y="560" width="10" height="12"/><rect x="700" y="600" width="12" height="10"/><rect x="760" y="470" width="20" height="18"/>
<rect x="925" y="478" width="16" height="14"/><rect x="950" y="560" width="12" height="10"/><rect x="840" y="540" width="12" height="12"/>
<rect x="893" y="555" width="10" height="10"/><rect x="970" y="690" width="14" height="10"/><rect x="830" y="740" width="10" height="10"/>
<rect x="850" y="830" width="30" height="25"/><rect x="900" y="840" width="12" height="12"/><rect x="940" y="860" width="16" height="20"/>
<rect x="990" y="770" width="18" height="10"/><rect x="780" y="800" width="20" height="28"/><rect x="390" y="770" width="10" height="10"/>
<rect x="420" y="790" width="8" height="8"/><rect x="455" y="845" width="10" height="30"/><rect x="480" y="850" width="8" height="25"/>
<rect x="405" y="855" width="12" height="12"/><rect x="670" y="710" width="20" height="10"/><rect x="575" y="830" width="6" height="30"/>
<rect x="1000" y="590" width="18" height="14"/><rect x="770" y="600" width="14" height="10"/><rect x="1020" y="840" width="16" height="14"/>
</g>
<!-- Hyde Park -->
<path d="M375,641 L495,630 L503,650 L522,682 L540,710 L541,738 L470,748 L375,752 Z" fill="#aad9b5"/>
<path d="M392,641 L405,658 L407,696 L394,702 L380,752" fill="none" stroke="#fff" stroke-width="2"/>
<path d="M375,671 Q385,702 430,714 Q470,716 481,720 Q482,728 470,729 Q420,730 392,718 Q378,708 375,696 Z" fill="#a3c3f3"/>
<!-- Green Park / St James -->
<path d="M545,745 L603,702 L612,740 L605,788 L575,792 L552,770 Z" fill="#aad9b5"/>
<path d="M625,770 L650,740 L700,718 L705,760 L640,772 Z" fill="#aad9b5"/>
<path d="M630,765 Q660,752 700,738 L698,748 Q665,760 635,770 Z" fill="#a3c3f3"/>
<path d="M570,768 Q583,775 588,785 L580,783 Q572,775 570,768 Z" fill="#a3c3f3"/>
<path d="M605,745 L700,765" fill="none" stroke="#fff" stroke-width="2.5"/>
<!-- canals -->
<path d="M700,380 L721,379 L747,370 L797,376" fill="none" stroke="#a1c2f6" stroke-width="3.5"/>
<path d="M761,370 L761,387" fill="none" stroke="#a1c2f6" stroke-width="3.5"/>
<path d="M890,397 L921,402 L933,398 L976,370 L985,361" fill="none" stroke="#a1c2f6" stroke-width="2.5"/>
<path d="M921,402 L933,431" fill="none" stroke="#a1c2f6" stroke-width="3"/>
<path d="M938,400 L946,424" fill="none" stroke="#a1c2f6" stroke-width="1.5"/>
<path d="M992,370 L1020,364 L1020,395 L1000,395 Z" fill="#aad9b5"/>
<path d="M404,473 Q416,456 431,450" fill="none" stroke="#a1c2f6" stroke-width="2.5"/>
<!-- Thames -->
<path d="M1059,675 L1004,675 L950,660 L897,652 L844,652 L800,655 L773,664 L755,674 L747,690 L744,720 L742,764 L735,834 L719,900 L750,900 L758,834 L766,762 L772,730 L777,704 L786,688 L800,681 L844,676 L897,675 L950,681 L1004,694 L1059,706 Z" fill="#a1c2f6" stroke="#fff" stroke-width="2.5" stroke-linejoin="round"/>
<!-- yellow main roads -->
<g fill="none" stroke-linecap="round" stroke-linejoin="round">
<g stroke="#efc35e" stroke-width="6">
<circle cx="490" cy="628" r="7" fill="none"/>
<path d="M372,362 L392,383 L426,429 L477,476 L494,502 L499,520"/>
<path d="M375,546 L434,542 L480,529 L500,520 L520,515"/>
<path d="M375,505 L409,540 L480,615 L497,622 L510,660 L540,712 L541,738"/>
<path d="M541,738 L480,748 L465,760 L440,795 L415,818 L375,822"/>
<path d="M477,487 L480,524 M496,487 L497,521"/>
<path d="M690,461 L749,424 L809,417 L865,409 L900,424 L946,444 L988,461 L995,479 L1019,475 L1057,503"/><path d="M756,425 L771,446 L796,438 L806,418"/>
<path d="M865,409 L882,361"/>
<path d="M905,832 L950,837 L997,839 L1017,845 L1056,897"/>
<path d="M1017,845 L1046,810 L1059,776"/>
<path d="M905,832 L899,857 L879,874 L838,895"/>
<path d="M879,874 L865,897"/>
<path d="M590,790 L630,840 L677,897"/>
<path d="M415,818 L420,850 L375,895"/>
</g>
<g stroke="#fbdc85" stroke-width="3.6">
<circle cx="490" cy="628" r="7" fill="none"/>
<path d="M372,362 L392,383 L426,429 L477,476 L494,502 L499,520"/>
<path d="M375,546 L434,542 L480,529 L500,520 L520,515"/>
<path d="M375,505 L409,540 L480,615 L497,622 L510,660 L540,712 L541,738"/>
<path d="M541,738 L480,748 L465,760 L440,795 L415,818 L375,822"/>
<path d="M477,487 L480,524 M496,487 L497,521"/>
<path d="M690,461 L749,424 L809,417 L865,409 L900,424 L946,444 L988,461 L995,479 L1019,475 L1057,503"/><path d="M756,425 L771,446 L796,438 L806,418"/>
<path d="M865,409 L882,361"/>
<path d="M905,832 L950,837 L997,839 L1017,845 L1056,897"/>
<path d="M1017,845 L1046,810 L1059,776"/>
<path d="M905,832 L899,857 L879,874 L838,895"/>
<path d="M879,874 L865,897"/>
<path d="M590,790 L630,840 L677,897"/>
<path d="M415,818 L420,850 L375,895"/>
</g>
</g>

<g transform="translate(382,378)"><circle r="4.7" fill="#fff" stroke="#cf3a3f" stroke-width="1.9"/><rect x="-6.8" y="-1.3" width="13.6" height="2.6" fill="#2a2f85"/></g>
<g transform="translate(632,382)"><circle r="4.7" fill="#fff" stroke="#cf3a3f" stroke-width="1.9"/><rect x="-6.8" y="-1.3" width="13.6" height="2.6" fill="#2a2f85"/></g>
<g transform="translate(672,450)"><circle r="4.7" fill="#fff" stroke="#cf3a3f" stroke-width="1.9"/><rect x="-6.8" y="-1.3" width="13.6" height="2.6" fill="#2a2f85"/></g>
<g transform="translate(462,519)"><circle r="4.7" fill="#fff" stroke="#cf3a3f" stroke-width="1.9"/><rect x="-6.8" y="-1.3" width="13.6" height="2.6" fill="#2a2f85"/></g>
<g transform="translate(410,543)"><circle r="4.7" fill="#fff" stroke="#cf3a3f" stroke-width="1.9"/><rect x="-6.8" y="-1.3" width="13.6" height="2.6" fill="#2a2f85"/></g>
<g transform="translate(426,547)"><circle r="4.7" fill="#fff" stroke="#cf3a3f" stroke-width="1.9"/><rect x="-6.8" y="-1.3" width="13.6" height="2.6" fill="#2a2f85"/></g>
<g transform="translate(493,618)"><circle r="4.7" fill="#fff" stroke="#cf3a3f" stroke-width="1.9"/><rect x="-6.8" y="-1.3" width="13.6" height="2.6" fill="#2a2f85"/></g>
<g transform="translate(610,601)"><circle r="4.7" fill="#fff" stroke="#cf3a3f" stroke-width="1.9"/><rect x="-6.8" y="-1.3" width="13.6" height="2.6" fill="#2a2f85"/></g>
<g transform="translate(688,588)"><circle r="4.7" fill="#fff" stroke="#cf3a3f" stroke-width="1.9"/><rect x="-6.8" y="-1.3" width="13.6" height="2.6" fill="#2a2f85"/></g>
<g transform="translate(702,588)"><circle r="4.7" fill="#fff" stroke="#cf3a3f" stroke-width="1.9"/><rect x="-6.8" y="-1.3" width="13.6" height="2.6" fill="#2a2f85"/></g>
<g transform="translate(555,612)"><circle r="4.7" fill="#fff" stroke="#cf3a3f" stroke-width="1.9"/><rect x="-6.8" y="-1.3" width="13.6" height="2.6" fill="#2a2f85"/></g>
<g transform="translate(568,612)"><circle r="4.7" fill="#fff" stroke="#cf3a3f" stroke-width="1.9"/><rect x="-6.8" y="-1.3" width="13.6" height="2.6" fill="#2a2f85"/></g>
<g transform="translate(867,400)"><circle r="4.7" fill="#fff" stroke="#cf3a3f" stroke-width="1.9"/><rect x="-6.8" y="-1.3" width="13.6" height="2.6" fill="#2a2f85"/></g>
<g transform="translate(1005,481)"><circle r="4.7" fill="#fff" stroke="#cf3a3f" stroke-width="1.9"/><rect x="-6.8" y="-1.3" width="13.6" height="2.6" fill="#2a2f85"/></g>
<g transform="translate(876,544)"><circle r="4.7" fill="#fff" stroke="#cf3a3f" stroke-width="1.9"/><rect x="-6.8" y="-1.3" width="13.6" height="2.6" fill="#2a2f85"/></g>
<g transform="translate(889,544)"><circle r="4.7" fill="#fff" stroke="#cf3a3f" stroke-width="1.9"/><rect x="-6.8" y="-1.3" width="13.6" height="2.6" fill="#2a2f85"/></g>
<g transform="translate(925,544)"><circle r="4.7" fill="#fff" stroke="#cf3a3f" stroke-width="1.9"/><rect x="-6.8" y="-1.3" width="13.6" height="2.6" fill="#2a2f85"/></g>
<g transform="translate(826,566)"><circle r="4.7" fill="#fff" stroke="#cf3a3f" stroke-width="1.9"/><rect x="-6.8" y="-1.3" width="13.6" height="2.6" fill="#2a2f85"/></g>
<g transform="translate(767,575)"><circle r="4.7" fill="#fff" stroke="#cf3a3f" stroke-width="1.9"/><rect x="-6.8" y="-1.3" width="13.6" height="2.6" fill="#2a2f85"/></g>
<g transform="translate(703,590)"><circle r="4.7" fill="#fff" stroke="#cf3a3f" stroke-width="1.9"/><rect x="-6.8" y="-1.3" width="13.6" height="2.6" fill="#2a2f85"/></g>
<g transform="translate(737,625)"><circle r="4.7" fill="#fff" stroke="#cf3a3f" stroke-width="1.9"/><rect x="-6.8" y="-1.3" width="13.6" height="2.6" fill="#2a2f85"/></g>
<g transform="translate(988,621)"><circle r="4.7" fill="#fff" stroke="#cf3a3f" stroke-width="1.9"/><rect x="-6.8" y="-1.3" width="13.6" height="2.6" fill="#2a2f85"/></g>
<g transform="translate(382,640)"><circle r="4.7" fill="#fff" stroke="#cf3a3f" stroke-width="1.9"/><rect x="-6.8" y="-1.3" width="13.6" height="2.6" fill="#2a2f85"/></g>
<g transform="translate(708,644)"><circle r="4.7" fill="#fff" stroke="#cf3a3f" stroke-width="1.9"/><rect x="-6.8" y="-1.3" width="13.6" height="2.6" fill="#2a2f85"/></g>
<g transform="translate(666,659)"><circle r="4.7" fill="#fff" stroke="#cf3a3f" stroke-width="1.9"/><rect x="-6.8" y="-1.3" width="13.6" height="2.6" fill="#2a2f85"/></g>
<g transform="translate(605,695)"><circle r="4.7" fill="#fff" stroke="#cf3a3f" stroke-width="1.9"/><rect x="-6.8" y="-1.3" width="13.6" height="2.6" fill="#2a2f85"/></g>
<g transform="translate(541,740)"><circle r="4.7" fill="#fff" stroke="#cf3a3f" stroke-width="1.9"/><rect x="-6.8" y="-1.3" width="13.6" height="2.6" fill="#2a2f85"/></g>
<g transform="translate(669,781)"><circle r="4.7" fill="#fff" stroke="#cf3a3f" stroke-width="1.9"/><rect x="-6.8" y="-1.3" width="13.6" height="2.6" fill="#2a2f85"/></g>
<g transform="translate(598,824)"><circle r="4.7" fill="#fff" stroke="#cf3a3f" stroke-width="1.9"/><rect x="-6.8" y="-1.3" width="13.6" height="2.6" fill="#2a2f85"/></g>
<g transform="translate(382,842)"><circle r="4.7" fill="#fff" stroke="#cf3a3f" stroke-width="1.9"/><rect x="-6.8" y="-1.3" width="13.6" height="2.6" fill="#2a2f85"/></g>
<g transform="translate(507,862)"><circle r="4.7" fill="#fff" stroke="#cf3a3f" stroke-width="1.9"/><rect x="-6.8" y="-1.3" width="13.6" height="2.6" fill="#2a2f85"/></g>
<g transform="translate(672,895)"><circle r="4.7" fill="#fff" stroke="#cf3a3f" stroke-width="1.9"/><rect x="-6.8" y="-1.3" width="13.6" height="2.6" fill="#2a2f85"/></g>
<g transform="translate(953,635)"><circle r="4.7" fill="#fff" stroke="#cf3a3f" stroke-width="1.9"/><rect x="-6.8" y="-1.3" width="13.6" height="2.6" fill="#2a2f85"/></g>
<g transform="translate(1003,649)"><circle r="4.7" fill="#fff" stroke="#cf3a3f" stroke-width="1.9"/><rect x="-6.8" y="-1.3" width="13.6" height="2.6" fill="#2a2f85"/></g>
<g transform="translate(873,730)"><circle r="4.7" fill="#fff" stroke="#cf3a3f" stroke-width="1.9"/><rect x="-6.8" y="-1.3" width="13.6" height="2.6" fill="#2a2f85"/></g>
<g transform="translate(802,740)"><circle r="4.7" fill="#fff" stroke="#cf3a3f" stroke-width="1.9"/><rect x="-6.8" y="-1.3" width="13.6" height="2.6" fill="#2a2f85"/></g>
<g transform="translate(953,760)"><circle r="4.7" fill="#fff" stroke="#cf3a3f" stroke-width="1.9"/><rect x="-6.8" y="-1.3" width="13.6" height="2.6" fill="#2a2f85"/></g>
<g transform="translate(823,787)"><circle r="4.7" fill="#fff" stroke="#cf3a3f" stroke-width="1.9"/><rect x="-6.8" y="-1.3" width="13.6" height="2.6" fill="#2a2f85"/></g>
<g transform="translate(905,836)"><circle r="4.7" fill="#fff" stroke="#cf3a3f" stroke-width="1.9"/><rect x="-6.8" y="-1.3" width="13.6" height="2.6" fill="#2a2f85"/></g>
<g transform="translate(991,481)" stroke="#d8403f" stroke-width="1.3" fill="none"><path d="M-6,-2.5 L6,-2.5 M-6,2.5 L6,2.5 M-3,-5 L3,0 L-3,5"/></g>
<g transform="translate(865,544)" stroke="#d8403f" stroke-width="1.3" fill="none"><path d="M-6,-2.5 L6,-2.5 M-6,2.5 L6,2.5 M-3,-5 L3,0 L-3,5"/></g>
<g transform="translate(977,646)" stroke="#d8403f" stroke-width="1.3" fill="none"><path d="M-6,-2.5 L6,-2.5 M-6,2.5 L6,2.5 M-3,-5 L3,0 L-3,5"/></g>
<g transform="translate(1055,640)" stroke="#d8403f" stroke-width="1.3" fill="none"><path d="M-6,-2.5 L6,-2.5 M-6,2.5 L6,2.5 M-3,-5 L3,0 L-3,5"/></g>
<g transform="translate(848,728)" stroke="#d8403f" stroke-width="1.3" fill="none"><path d="M-6,-2.5 L6,-2.5 M-6,2.5 L6,2.5 M-3,-5 L3,0 L-3,5"/></g>
<g transform="translate(822,739)" stroke="#d8403f" stroke-width="1.3" fill="none"><path d="M-6,-2.5 L6,-2.5 M-6,2.5 L6,2.5 M-3,-5 L3,0 L-3,5"/></g>
<g transform="translate(493,483)"><path d="M0,22 C-3,16 -12,9 -12,0 A12,12 0 1 1 12,0 C12,9 3,16 0,22 Z" fill="#15a6b9" stroke="#fff" stroke-width="1"/><g fill="#fff"><path d="M-6,-3 L0,-7 L6,-3 Z"/><rect x="-6" y="4" width="12" height="2"/><rect x="-5" y="-3" width="2" height="7"/><rect x="3" y="-3" width="2" height="7"/><text x="0" y="3" font-size="6" font-weight="700" text-anchor="middle" fill="#fff">M</text></g></g>
<g transform="translate(717,531)"><path d="M0,22 C-3,16 -12,9 -12,0 A12,12 0 1 1 12,0 C12,9 3,16 0,22 Z" fill="#15a6b9" stroke="#fff" stroke-width="1"/><g fill="#fff"><path d="M-6,-3 L0,-7 L6,-3 Z"/><rect x="-6" y="4" width="12" height="2"/><rect x="-5" y="-3" width="2" height="7"/><rect x="3" y="-3" width="2" height="7"/><text x="0" y="3" font-size="6" font-weight="700" text-anchor="middle" fill="#fff">M</text></g></g>
<g transform="translate(755,464)"><path d="M0,22 C-3,16 -12,9 -12,0 A12,12 0 1 1 12,0 C12,9 3,16 0,22 Z" fill="#15a6b9" stroke="#fff" stroke-width="1"/><g fill="#fff"><path d="M-6,-3 L0,-7 L6,-3 Z"/><rect x="-6" y="4" width="12" height="2"/><rect x="-5" y="-3" width="2" height="7"/><rect x="3" y="-3" width="2" height="7"/><text x="0" y="3" font-size="6" font-weight="700" text-anchor="middle" fill="#fff">M</text></g></g>
<g transform="translate(811,470)"><path d="M0,22 C-3,16 -12,9 -12,0 A12,12 0 1 1 12,0 C12,9 3,16 0,22 Z" fill="#15a6b9" stroke="#fff" stroke-width="1"/><g fill="#fff"><path d="M-6,-3 L0,-7 L6,-3 Z"/><rect x="-6" y="4" width="12" height="2"/><rect x="-5" y="-3" width="2" height="7"/><rect x="3" y="-3" width="2" height="7"/><text x="0" y="3" font-size="6" font-weight="700" text-anchor="middle" fill="#fff">M</text></g></g>
<g transform="translate(952,523)"><path d="M0,22 C-3,16 -12,9 -12,0 A12,12 0 1 1 12,0 C12,9 3,16 0,22 Z" fill="#15a6b9" stroke="#fff" stroke-width="1"/><g fill="#fff"><path d="M-7,-5 Q-2,-7 1,-4 Q1,3 -3,4 Q-7,2 -7,-5 Z"/><path d="M0,-3 Q4,-6 7,-3 Q7,4 3,5 Q0,3 0,-3 Z" opacity=".9"/></g></g>
<g transform="translate(970,574)"><path d="M0,22 C-3,16 -12,9 -12,0 A12,12 0 1 1 12,0 C12,9 3,16 0,22 Z" fill="#15a6b9" stroke="#fff" stroke-width="1"/><g fill="#fff"><path d="M-5,6 L-4,-2 L-6,-2 L-6,-6 L-4,-6 L-4,-4 L-2,-4 L-2,-6 L2,-6 L2,-4 L4,-4 L4,-6 L6,-6 L6,-2 L4,-2 L5,6 Z"/></g></g>
<g transform="translate(1026,626)"><path d="M0,22 C-3,16 -12,9 -12,0 A12,12 0 1 1 12,0 C12,9 3,16 0,22 Z" fill="#15a6b9" stroke="#fff" stroke-width="1"/><g fill="#fff"><rect x="-6" y="-3" width="12" height="8" rx="1.5"/><circle cx="0" cy="1" r="2.2" fill="#17a0b2"/><rect x="-2.5" y="-5" width="5" height="2"/></g></g>
<g transform="translate(625,646)"><path d="M0,22 C-3,16 -12,9 -12,0 A12,12 0 1 1 12,0 C12,9 3,16 0,22 Z" fill="#15a6b9" stroke="#fff" stroke-width="1"/><g fill="#fff"><path d="M-6,2 A6.5,6.5 0 1 1 6,-1 C6,2 3,1 2,3 C1,6 -5,6 -6,2 Z"/><g fill="#17a0b2"><circle cx="-3" cy="-2" r="1.2"/><circle cx="0" cy="-4" r="1.2"/><circle cx="3" cy="-2" r="1.2"/></g></g></g>
<g transform="translate(786,628)"><path d="M0,22 C-3,16 -12,9 -12,0 A12,12 0 1 1 12,0 C12,9 3,16 0,22 Z" fill="#15a6b9" stroke="#fff" stroke-width="1"/><g fill="#fff"><path d="M-6,2 A6.5,6.5 0 1 1 6,-1 C6,2 3,1 2,3 C1,6 -5,6 -6,2 Z"/><g fill="#17a0b2"><circle cx="-3" cy="-2" r="1.2"/><circle cx="0" cy="-4" r="1.2"/><circle cx="3" cy="-2" r="1.2"/></g></g></g>
<g transform="translate(1005,702)"><path d="M0,22 C-3,16 -12,9 -12,0 A12,12 0 1 1 12,0 C12,9 3,16 0,22 Z" fill="#15a6b9" stroke="#fff" stroke-width="1"/><g fill="#fff"><rect x="-6" y="-3" width="12" height="8" rx="1.5"/><circle cx="0" cy="1" r="2.2" fill="#17a0b2"/><rect x="-2.5" y="-5" width="5" height="2"/></g></g>
<g transform="translate(610,737)"><path d="M0,22 C-3,16 -12,9 -12,0 A12,12 0 1 1 12,0 C12,9 3,16 0,22 Z" fill="#15a6b9" stroke="#fff" stroke-width="1"/><g fill="#fff"><path d="M-5,6 L-4,-2 L-6,-2 L-6,-6 L-4,-6 L-4,-4 L-2,-4 L-2,-6 L2,-6 L2,-4 L4,-4 L4,-6 L6,-6 L6,-2 L4,-2 L5,6 Z"/></g></g>
<g transform="translate(712,855)"><path d="M0,22 C-3,16 -12,9 -12,0 A12,12 0 1 1 12,0 C12,9 3,16 0,22 Z" fill="#15a6b9" stroke="#fff" stroke-width="1"/><g fill="#fff"><path d="M-6,2 A6.5,6.5 0 1 1 6,-1 C6,2 3,1 2,3 C1,6 -5,6 -6,2 Z"/><g fill="#17a0b2"><circle cx="-3" cy="-2" r="1.2"/><circle cx="0" cy="-4" r="1.2"/><circle cx="3" cy="-2" r="1.2"/></g></g></g>
<g transform="translate(712,411)"><path d="M0,22 C-3,16 -12,9 -12,0 A12,12 0 1 1 12,0 C12,9 3,16 0,22 Z" fill="#6f7b86" stroke="#fff" stroke-width="1"/><g fill="#fff"><path d="M-6,-4 Q-3,-5 -0.5,-3.5 V5 Q-3,3.5 -6,4.5 Z M6,-4 Q3,-5 0.5,-3.5 V5 Q3,3.5 6,4.5 Z"/></g></g>
<g transform="translate(742,403)"><path d="M0,22 C-3,16 -12,9 -12,0 A12,12 0 1 1 12,0 C12,9 3,16 0,22 Z" fill="#6f7b86" stroke="#fff" stroke-width="1"/><circle r="4.5" fill="#fff"/></g>
<g transform="translate(921,596)"><path d="M0,22 C-3,16 -12,9 -12,0 A12,12 0 1 1 12,0 C12,9 3,16 0,22 Z" fill="#6f7b86" stroke="#fff" stroke-width="1"/><path d="M-1.2,-7 H1.2 V-3 H5 V-0.8 H1.2 V7 H-1.2 V-0.8 H-5 V-3 H-1.2 Z" fill="#fff"/></g>
<g transform="translate(396,413)"><path d="M0,22 C-3,16 -12,9 -12,0 A12,12 0 1 1 12,0 C12,9 3,16 0,22 Z" fill="#2e9e4f" stroke="#fff" stroke-width="1"/><circle r="4.5" fill="#fff"/></g>
<g transform="translate(372,790)"><path d="M0,22 C-3,16 -12,9 -12,0 A12,12 0 1 1 12,0 C12,9 3,16 0,22 Z" fill="#15a6b9" stroke="#fff" stroke-width="1"/></g>
<text x="848" y="384" fill="#3c4043" font-size="15" font-weight="700" letter-spacing="2.2" text-anchor="start" stroke="#fff" stroke-width="3" paint-order="stroke" stroke-linejoin="round">ANGEL</text>
<text x="759" y="414" fill="#5f6368" font-size="16.5" font-weight="400" letter-spacing="0" text-anchor="start" stroke="#fff" stroke-width="3" paint-order="stroke" stroke-linejoin="round">King's Cross</text>
<text x="946" y="454" fill="#c7782f" font-size="16.5" font-weight="400" letter-spacing="0" text-anchor="start" stroke="#fff" stroke-width="3" paint-order="stroke" stroke-linejoin="round">Dishoom Shore</text>
<text x="827" y="482" fill="#1d8c94" font-size="16.5" font-weight="400" letter-spacing="0" text-anchor="start" stroke="#fff" stroke-width="3" paint-order="stroke" stroke-linejoin="round">The Postal Museum</text>
<text x="968" y="535" fill="#1d8c94" font-size="16.5" font-weight="400" letter-spacing="0" text-anchor="start" stroke="#fff" stroke-width="3" paint-order="stroke" stroke-linejoin="round">Barbican Ce</text>
<text x="988" y="583" fill="#1d8c94" font-size="16.5" font-weight="400" letter-spacing="0" text-anchor="start" stroke="#fff" stroke-width="3" paint-order="stroke" stroke-linejoin="round">Guildhall</text>
<text x="998" y="608" fill="#1d8c94" font-size="16.5" font-weight="400" letter-spacing="0" text-anchor="start" stroke="#fff" stroke-width="3" paint-order="stroke" stroke-linejoin="round">Sky Gar</text>
<text x="759" y="606" fill="#5f6368" font-size="16.5" font-weight="400" letter-spacing="0" text-anchor="start" stroke="#fff" stroke-width="3" paint-order="stroke" stroke-linejoin="round">St. Paul's Cathedral</text>
<text x="456" y="418" fill="#2f8a52" font-size="16.5" font-weight="400" letter-spacing="0" text-anchor="start" stroke="#fff" stroke-width="3" paint-order="stroke" stroke-linejoin="round">The Regent's</text>
<text x="488" y="435" fill="#2f8a52" font-size="16.5" font-weight="400" letter-spacing="0" text-anchor="start" stroke="#fff" stroke-width="3" paint-order="stroke" stroke-linejoin="round">Park</text>
<text x="559" y="422" fill="#5f6368" font-size="16.5" font-weight="400" letter-spacing="0" text-anchor="start" stroke="#fff" stroke-width="3" paint-order="stroke" stroke-linejoin="round">The British Library</text>
<text x="381" y="485" fill="#1d8c94" font-size="16.5" font-weight="400" letter-spacing="0" text-anchor="start" stroke="#fff" stroke-width="3" paint-order="stroke" stroke-linejoin="round">The Sherlock</text>
<text x="373" y="502" fill="#1d8c94" font-size="16.5" font-weight="400" letter-spacing="0" text-anchor="start" stroke="#fff" stroke-width="3" paint-order="stroke" stroke-linejoin="round">mes Museum</text>
<text x="593" y="476" fill="#1d8c94" font-size="16.5" font-weight="400" letter-spacing="0" text-anchor="start" stroke="#fff" stroke-width="3" paint-order="stroke" stroke-linejoin="round">Foundling Museum</text>
<text x="554" y="543" fill="#1d8c94" font-size="16.5" font-weight="400" letter-spacing="0" text-anchor="start" stroke="#fff" stroke-width="3" paint-order="stroke" stroke-linejoin="round">The British Museum</text>
<text x="498" y="565" fill="#3c4043" font-size="15" font-weight="700" letter-spacing="1.6" text-anchor="start" stroke="#fff" stroke-width="3" paint-order="stroke" stroke-linejoin="round">MARYLEBONE</text>
<text x="376" y="598" fill="#3c4043" font-size="15" font-weight="700" letter-spacing="2.2" text-anchor="start" stroke="#fff" stroke-width="3" paint-order="stroke" stroke-linejoin="round">NGTON</text>
<text x="438" y="658" fill="#1d8c94" font-size="16.5" font-weight="400" letter-spacing="0" text-anchor="start" stroke="#fff" stroke-width="3" paint-order="stroke" stroke-linejoin="round">Royal Academy of Arts</text>
<text x="415" y="701" fill="#2f8a52" font-size="16.5" font-weight="400" letter-spacing="0" text-anchor="start" stroke="#fff" stroke-width="3" paint-order="stroke" stroke-linejoin="round">Hyde Park</text>
<text x="627" y="750" fill="#1d8c94" font-size="16.5" font-weight="400" letter-spacing="0" text-anchor="start" stroke="#fff" stroke-width="3" paint-order="stroke" stroke-linejoin="round">Buckingham Palace</text>
<text x="372" y="774" fill="#1d8c94" font-size="16.5" font-weight="400" letter-spacing="0" text-anchor="start" stroke="#fff" stroke-width="3" paint-order="stroke" stroke-linejoin="round">ral History Museum</text>
<text x="588" y="810" fill="#3c4043" font-size="15" font-weight="700" letter-spacing="2.2" text-anchor="start" stroke="#fff" stroke-width="3" paint-order="stroke" stroke-linejoin="round">WESTMINSTER</text>
<text x="610" y="867" fill="#1d8c94" font-size="16.5" font-weight="400" letter-spacing="0" text-anchor="start" stroke="#fff" stroke-width="3" paint-order="stroke" stroke-linejoin="round">Tate Britain</text>
<text x="589" y="886" fill="#3c4043" font-size="13.5" font-weight="700" letter-spacing="1.8" text-anchor="start" stroke="#fff" stroke-width="3" paint-order="stroke" stroke-linejoin="round">PIMLICO</text>
<text x="624" y="625" fill="#3c4043" font-size="15" font-weight="700" letter-spacing="2.2" text-anchor="start" stroke="#fff" stroke-width="3" paint-order="stroke" stroke-linejoin="round">SOHO</text>
<text x="803" y="638" fill="#1d8c94" font-size="16.5" font-weight="400" letter-spacing="0" text-anchor="start" stroke="#fff" stroke-width="3" paint-order="stroke" stroke-linejoin="round">Somerset House</text>
<text x="824" y="668" fill="#3b6cc5" font-size="15" font-weight="400" letter-spacing="0" text-anchor="start">La Tamise</text>
<text x="937" y="672" fill="#1d8c94" font-size="16.5" font-weight="400" letter-spacing="0" text-anchor="start" stroke="#fff" stroke-width="3" paint-order="stroke" stroke-linejoin="round">Tower of London</text>
<text x="656" y="704" fill="#202124" font-size="28" font-weight="700" letter-spacing="0" text-anchor="start" stroke="#fff" stroke-width="3" paint-order="stroke" stroke-linejoin="round">Londres</text>
<text x="914" y="712" fill="#1d8c94" font-size="16.5" font-weight="400" letter-spacing="0" text-anchor="start" stroke="#fff" stroke-width="3" paint-order="stroke" stroke-linejoin="round">The Shard</text>
<text x="958" y="747" fill="#3c4043" font-size="12.5" font-weight="700" letter-spacing="1.2" text-anchor="start" stroke="#fff" stroke-width="3" paint-order="stroke" stroke-linejoin="round">SOUTH</text>
<text x="738" y="855" fill="#3c4043" font-size="15" font-weight="700" letter-spacing="2.2" text-anchor="start" stroke="#fff" stroke-width="3" paint-order="stroke" stroke-linejoin="round">LAMBETH</text>
<text x="437" y="420" fill="#3c4043" font-size="12.5" font-weight="400" letter-spacing="0" text-anchor="start" stroke="#fff" stroke-width="3" paint-order="stroke" stroke-linejoin="round" transform="rotate(-62 437 420)">A5205</text>
<text x="953" y="398" fill="#3c4043" font-size="12.5" font-weight="400" letter-spacing="0" text-anchor="start" stroke="#fff" stroke-width="3" paint-order="stroke" stroke-linejoin="round" transform="rotate(72 953 398)">B144</text>
<text x="980" y="364" fill="#3c4043" font-size="12.5" font-weight="400" letter-spacing="0" text-anchor="start" stroke="#fff" stroke-width="3" paint-order="stroke" stroke-linejoin="round" transform="rotate(62 980 364)">N Rd</text>
<text x="540" y="598" fill="#3c4043" font-size="12.5" font-weight="400" letter-spacing="0" text-anchor="start" stroke="#fff" stroke-width="3" paint-order="stroke" stroke-linejoin="round" transform="rotate(-14 540 598)">A5204</text>
<text x="628" y="601" fill="#3c4043" font-size="12.5" font-weight="400" letter-spacing="0" text-anchor="start" stroke="#fff" stroke-width="3" paint-order="stroke" stroke-linejoin="round" transform="rotate(-10 628 601)">A40</text>
<text x="536" y="691" fill="#3c4043" font-size="12.5" font-weight="400" letter-spacing="0" text-anchor="start" stroke="#fff" stroke-width="3" paint-order="stroke" stroke-linejoin="round" transform="rotate(62 536 691)">A4202</text>
<text x="549" y="816" fill="#3c4043" font-size="12.5" font-weight="400" letter-spacing="0" text-anchor="start" stroke="#fff" stroke-width="3" paint-order="stroke" stroke-linejoin="round" transform="rotate(52 549 816)">A3213</text>
<text x="536" y="880" fill="#3c4043" font-size="12.5" font-weight="400" letter-spacing="0" text-anchor="start" stroke="#fff" stroke-width="3" paint-order="stroke" stroke-linejoin="round" transform="rotate(-55 536 880)">Ebury St</text>
<text x="808" y="657" fill="#3c4043" font-size="12.5" font-weight="400" letter-spacing="0" text-anchor="start" stroke="#fff" stroke-width="3" paint-order="stroke" stroke-linejoin="round" transform="rotate(-10 808 657)">A3211</text>
<text x="834" y="715" fill="#3c4043" font-size="12.5" font-weight="400" letter-spacing="0" text-anchor="start" stroke="#fff" stroke-width="3" paint-order="stroke" stroke-linejoin="round" transform="rotate(-30 834 715)">A3200</text>
<text x="768" y="822" fill="#3c4043" font-size="12.5" font-weight="400" letter-spacing="0" text-anchor="start" stroke="#fff" stroke-width="3" paint-order="stroke" stroke-linejoin="round" transform="rotate(-60 768 822)">A3036</text>
<text x="852" y="810" fill="#3c4043" font-size="12.5" font-weight="400" letter-spacing="0" text-anchor="start" stroke="#fff" stroke-width="3" paint-order="stroke" stroke-linejoin="round" transform="rotate(30 852 810)">A302</text>
<text x="975" y="795" fill="#3c4043" font-size="12.5" font-weight="400" letter-spacing="0" text-anchor="start" stroke="#fff" stroke-width="3" paint-order="stroke" stroke-linejoin="round" transform="rotate(62 975 795)">A2</text>
<text x="996" y="842" fill="#3c4043" font-size="12.5" font-weight="400" letter-spacing="0" text-anchor="start" stroke="#fff" stroke-width="3" paint-order="stroke" stroke-linejoin="round" transform="rotate(25 996 842)">A201</text>
<text x="503" y="527" fill="#3c4043" font-size="12.5" font-weight="400" letter-spacing="0" text-anchor="start" stroke="#fff" stroke-width="3" paint-order="stroke" stroke-linejoin="round" transform="rotate(-20 503 527)">A50</text>
<path d="M680,534 L664,516 L633,524 L624,528 L620,523 L620,531 L600,527 L600,533 L584,536 L567,528 L569,538 L559,545 L537,550 L530,558 L531,565 L522,564 L515,571 L516,576 L502,578 L496,582 L517,646 L500,652 L538,710 L537,724 L546,732 L543,739 L536,742 L545,756 L569,782 L579,806 L589,812 L610,814 L669,804 L700,782 L722,772 L723,763 L721,720 L717,689 L715,671 L708,660 L707,639 L703,622 L719,601 L722,589 L701,558 L685,531 L680,534" fill="none" stroke="#3b35d8" stroke-width="3.6" stroke-linejoin="round" stroke-linecap="round"/>
<path d="M723,763 L785,766 L792,770 L800,766 L817,758" fill="none" stroke="#3b35d8" stroke-width="3.6" stroke-linejoin="round" stroke-linecap="round"/>
<path d="M792,770 L791,759 L789,746 L795,745" fill="none" stroke="#3b35d8" stroke-width="2.5" stroke-linejoin="round" stroke-linecap="round"/>
<path d="M633,515 L651,521 L671,541 L690,581 L700,588 L706,597 L734,590 L770,622 L775,640 L784,661 L807,700 L816,714" fill="none" stroke="#b9a6f3" stroke-width="3.2" stroke-linejoin="round" stroke-linecap="round"/>
<path d="M651,521 L675,519 L690,505 L715,517 L732,514 L758,557 L770,553 L772,535 L778,541 L791,541 L821,527 L839,535 L850,540 L851,554 L858,551 L858,545 L875,520 L920,508 L927,543 L885,572 L872,573 L879,620 L878,740 L875,752" fill="none" stroke="#b9a6f3" stroke-width="3.2" stroke-linejoin="round" stroke-linecap="round"/>
<path d="M795,745 L813,728 L833,740 L820,760 L840,752 L868,762 L881,772 L897,780 L893,770" fill="none" stroke="#b9a6f3" stroke-width="3.2" stroke-linejoin="round" stroke-linecap="round"/>
<path d="M795,745 L790,760 L800,766" fill="none" stroke="#b9a6f3" stroke-width="3.2" stroke-linejoin="round" stroke-linecap="round"/>
<g transform="translate(666,498)"><path d="M0,22 C-4,16 -13.5,9 -13.5,0 A13.5,13.5 0 1 1 13.5,0 C13.5,9 4,16 0,22 Z" fill="#3d3ae6" stroke="#1c1633" stroke-width="1.5"/><text x="0" y="7" font-size="17" font-weight="700" fill="#fff" text-anchor="middle"></text></g>
<g transform="translate(587,495.5)"><path d="M0,22 C-4,16 -13.5,9 -13.5,0 A13.5,13.5 0 1 1 13.5,0 C13.5,9 4,16 0,22 Z" fill="#3d3ae6" stroke="#1c1633" stroke-width="1.5"/><text x="0" y="7" font-size="17" font-weight="700" fill="#fff" text-anchor="middle">9</text></g>
<g transform="translate(581.8,513)"><path d="M0,22 C-4,16 -13.5,9 -13.5,0 A13.5,13.5 0 1 1 13.5,0 C13.5,9 4,16 0,22 Z" fill="#3d3ae6" stroke="#1c1633" stroke-width="1.5"/><text x="0" y="7" font-size="17" font-weight="700" fill="#fff" text-anchor="middle">8</text></g>
<g transform="translate(597.4,504)"><path d="M0,22 C-4,16 -13.5,9 -13.5,0 A13.5,13.5 0 1 1 13.5,0 C13.5,9 4,16 0,22 Z" fill="#3d3ae6" stroke="#1c1633" stroke-width="1.5"/><text x="0" y="7" font-size="17" font-weight="700" fill="#fff" text-anchor="middle">10</text></g>
<g transform="translate(616,500)"><path d="M0,22 C-4,16 -13.5,9 -13.5,0 A13.5,13.5 0 1 1 13.5,0 C13.5,9 4,16 0,22 Z" fill="#3d3ae6" stroke="#1c1633" stroke-width="1.5"/><text x="0" y="7" font-size="17" font-weight="700" fill="#fff" text-anchor="middle">11</text></g>
<g transform="translate(492.6,558)"><path d="M0,22 C-4,16 -13.5,9 -13.5,0 A13.5,13.5 0 1 1 13.5,0 C13.5,9 4,16 0,22 Z" fill="#3d3ae6" stroke="#1c1633" stroke-width="1.5"/><text x="0" y="7" font-size="17" font-weight="700" fill="#fff" text-anchor="middle">1</text></g>
<g transform="translate(504.5,556.5)"><path d="M0,22 C-4,16 -13.5,9 -13.5,0 A13.5,13.5 0 1 1 13.5,0 C13.5,9 4,16 0,22 Z" fill="#3d3ae6" stroke="#1c1633" stroke-width="1.5"/><text x="0" y="7" font-size="17" font-weight="700" fill="#fff" text-anchor="middle">2</text></g>
<g transform="translate(511.7,550)"><path d="M0,22 C-4,16 -13.5,9 -13.5,0 A13.5,13.5 0 1 1 13.5,0 C13.5,9 4,16 0,22 Z" fill="#3d3ae6" stroke="#1c1633" stroke-width="1.5"/><text x="0" y="7" font-size="17" font-weight="700" fill="#fff" text-anchor="middle">3</text></g>
<g transform="translate(518,534)"><path d="M0,22 C-4,16 -13.5,9 -13.5,0 A13.5,13.5 0 1 1 13.5,0 C13.5,9 4,16 0,22 Z" fill="#3d3ae6" stroke="#1c1633" stroke-width="1.5"/><text x="0" y="7" font-size="17" font-weight="700" fill="#fff" text-anchor="middle">4</text></g>
<g transform="translate(528,532.5)"><path d="M0,22 C-4,16 -13.5,9 -13.5,0 A13.5,13.5 0 1 1 13.5,0 C13.5,9 4,16 0,22 Z" fill="#3d3ae6" stroke="#1c1633" stroke-width="1.5"/><text x="0" y="7" font-size="17" font-weight="700" fill="#fff" text-anchor="middle">5</text></g>
<g transform="translate(537.7,517)"><path d="M0,22 C-4,16 -13.5,9 -13.5,0 A13.5,13.5 0 1 1 13.5,0 C13.5,9 4,16 0,22 Z" fill="#3d3ae6" stroke="#1c1633" stroke-width="1.5"/><text x="0" y="7" font-size="17" font-weight="700" fill="#fff" text-anchor="middle">6</text></g>
<g transform="translate(556,516)"><path d="M0,22 C-4,16 -13.5,9 -13.5,0 A13.5,13.5 0 1 1 13.5,0 C13.5,9 4,16 0,22 Z" fill="#3d3ae6" stroke="#1c1633" stroke-width="1.5"/><text x="0" y="7" font-size="17" font-weight="700" fill="#fff" text-anchor="middle">7</text></g>
<g transform="translate(652.5,499)"><path d="M0,22 C-4,16 -13.5,9 -13.5,0 A13.5,13.5 0 1 1 13.5,0 C13.5,9 4,16 0,22 Z" fill="#c4aaf7" stroke="#1c1633" stroke-width="1.5"/><text x="0" y="7" font-size="19" font-weight="400" fill="#fff" text-anchor="middle">1</text></g>
<g transform="translate(633,497)"><path d="M0,22 C-4,16 -13.5,9 -13.5,0 A13.5,13.5 0 1 1 13.5,0 C13.5,9 4,16 0,22 Z" fill="#c4aaf7" stroke="#1c1633" stroke-width="1.5"/><text x="0" y="7" font-size="19" font-weight="400" fill="#fff" text-anchor="middle">2</text></g>
<g transform="translate(673,494)"><path d="M0,22 C-4,16 -13.5,9 -13.5,0 A13.5,13.5 0 1 1 13.5,0 C13.5,9 4,16 0,22 Z" fill="#c4aaf7" stroke="#1c1633" stroke-width="1.5"/><text x="0" y="7" font-size="19" font-weight="400" fill="#fff" text-anchor="middle">3</text></g>
<g transform="translate(706,492)"><path d="M0,22 C-4,16 -13.5,9 -13.5,0 A13.5,13.5 0 1 1 13.5,0 C13.5,9 4,16 0,22 Z" fill="#c4aaf7" stroke="#1c1633" stroke-width="1.5"/><text x="0" y="7" font-size="19" font-weight="400" fill="#fff" text-anchor="middle">4</text></g>
<g transform="translate(744,507)"><path d="M0,22 C-4,16 -13.5,9 -13.5,0 A13.5,13.5 0 1 1 13.5,0 C13.5,9 4,16 0,22 Z" fill="#c4aaf7" stroke="#1c1633" stroke-width="1.5"/><text x="0" y="7" font-size="19" font-weight="400" fill="#fff" text-anchor="middle">x</text></g>
<g transform="translate(736,494)"><path d="M0,22 C-4,16 -13.5,9 -13.5,0 A13.5,13.5 0 1 1 13.5,0 C13.5,9 4,16 0,22 Z" fill="#c4aaf7" stroke="#1c1633" stroke-width="1.5"/><text x="0" y="7" font-size="19" font-weight="400" fill="#fff" text-anchor="middle">5</text></g>
<g transform="translate(777,511)"><path d="M0,22 C-4,16 -13.5,9 -13.5,0 A13.5,13.5 0 1 1 13.5,0 C13.5,9 4,16 0,22 Z" fill="#c4aaf7" stroke="#1c1633" stroke-width="1.5"/><text x="0" y="7" font-size="19" font-weight="400" fill="#fff" text-anchor="middle">6</text></g>
<g transform="translate(799,529)"><path d="M0,22 C-4,16 -13.5,9 -13.5,0 A13.5,13.5 0 1 1 13.5,0 C13.5,9 4,16 0,22 Z" fill="#c4aaf7" stroke="#1c1633" stroke-width="1.5"/><text x="0" y="7" font-size="19" font-weight="400" fill="#fff" text-anchor="middle">7</text></g>
<g transform="translate(793,516)"><path d="M0,22 C-4,16 -13.5,9 -13.5,0 A13.5,13.5 0 1 1 13.5,0 C13.5,9 4,16 0,22 Z" fill="#c4aaf7" stroke="#1c1633" stroke-width="1.5"/><text x="0" y="7" font-size="19" font-weight="400" fill="#fff" text-anchor="middle">8</text></g>
<g transform="translate(837,509)"><path d="M0,22 C-4,16 -13.5,9 -13.5,0 A13.5,13.5 0 1 1 13.5,0 C13.5,9 4,16 0,22 Z" fill="#c4aaf7" stroke="#1c1633" stroke-width="1.5"/><text x="0" y="7" font-size="19" font-weight="400" fill="#fff" text-anchor="middle">9</text></g>
<g transform="translate(859,524)"><path d="M0,22 C-4,16 -13.5,9 -13.5,0 A13.5,13.5 0 1 1 13.5,0 C13.5,9 4,16 0,22 Z" fill="#c4aaf7" stroke="#1c1633" stroke-width="1.5"/><text x="0" y="7" font-size="19" font-weight="400" fill="#fff" text-anchor="middle">10</text></g>
<g transform="translate(902,490)"><path d="M0,22 C-4,16 -13.5,9 -13.5,0 A13.5,13.5 0 1 1 13.5,0 C13.5,9 4,16 0,22 Z" fill="#c4aaf7" stroke="#1c1633" stroke-width="1.5"/><text x="0" y="7" font-size="19" font-weight="400" fill="#fff" text-anchor="middle">11</text></g>
<g transform="translate(918,480)"><path d="M0,22 C-4,16 -13.5,9 -13.5,0 A13.5,13.5 0 1 1 13.5,0 C13.5,9 4,16 0,22 Z" fill="#c4aaf7" stroke="#1c1633" stroke-width="1.5"/><text x="0" y="7" font-size="19" font-weight="400" fill="#fff" text-anchor="middle">12</text></g>
<g transform="translate(881,766)"><path d="M0,22 C-4,16 -13.5,9 -13.5,0 A13.5,13.5 0 1 1 13.5,0 C13.5,9 4,16 0,22 Z" fill="#c4aaf7" stroke="#1c1633" stroke-width="1.5"/><text x="0" y="7" font-size="19" font-weight="400" fill="#fff" text-anchor="middle"></text></g>
<g transform="translate(881,758)"><path d="M0,22 C-4,16 -13.5,9 -13.5,0 A13.5,13.5 0 1 1 13.5,0 C13.5,9 4,16 0,22 Z" fill="#c4aaf7" stroke="#1c1633" stroke-width="1.5"/><text x="0" y="7" font-size="19" font-weight="400" fill="#fff" text-anchor="middle">14</text></g>
<g transform="translate(816,714)"><path d="M0,22 C-4,16 -15,9 -15,0 A15,15 0 1 1 15,0 C15,9 4,16 0,22 Z" fill="#c9b1f5"/><circle r="10" fill="#fff" opacity=".9"/><path d="M-6,3 V-2 H6 V3 M-6,0 H6 M-4,-2 V-4 H4 V-2" fill="none" stroke="#b79ef0" stroke-width="1.6"/></g>
<rect x="1019" y="362" width="40" height="59" fill="#1565b0"/>
<path d="M1033,380 L1046,391 L1033,402 Z" fill="none" stroke="#d4e9fc" stroke-width="2.2" stroke-linejoin="round"/>
<rect x="998" y="722" width="47" height="100" fill="#fff" rx="2" style="filter:drop-shadow(0 1px 2px rgba(0,0,0,.25))"/>
<path d="M1005,772 H1038" stroke="#e6e6e6" stroke-width="1"/>
<path d="M1021,738 V757 M1011.5,747.5 H1030.5" stroke="#666" stroke-width="3.5"/>
<path d="M1011.5,797.5 H1030.5" stroke="#666" stroke-width="3.5"/>

</svg>
<!-- /MAP -->
  <!-- right panel -->
  <div class="a" style="left:977px;top:284px;width:272px;height:32px;border-radius:16px;background:#efefef"></div>
  <svg class="a" style="left:1005px;top:294px" width="11" height="12" viewBox="0 0 11 12" fill="none" stroke="#666" stroke-width="1.3"><path d="M1 1H10L6.5 5.5V9.5L4.5 11V5.5Z" stroke-linejoin="round"/></svg>
  <div class="t" style="left:1028px;top:292px;font-size:15px;color:#6b6b6b;letter-spacing:.65px">Voir les options d'affichage</div>

  <div class="rc" style="top:336px">
    <div class="rh"><div class="cb"><svg width="22" height="22" viewBox="0 0 22 22" fill="none" stroke="#fff" stroke-width="2.2"><path d="M5 11.5L9 15.5L17.5 6.5"/></svg></div><div class="a" style="left:44px;top:6px"><svg width="30" height="30" viewBox="0 0 30 30" fill="none" stroke="#1a1a1a"><circle cx="15" cy="15" r="10" stroke-width="2.6"/><path d="M15 1.5V5M15 25V28.5M1.5 15H5M25 15H28.5" stroke-width="2.6"/></svg></div><div class="a dotc" style="left:83px;top:9px;background:#c6a9f7"></div><div class="t rn" style="left:117px;top:14px">Julia Virmond | AS-987-WX</div>
      <div class="badge" style="left:457px;top:11px;width:79px">EN COURS</div>
      <div class="prog" style="left:545px"><i class="g" style="width:48px"></i><i style="left:48px;width:10px;background:#ee4b4b"></i><span style="left:56px">40 %</span></div>
      <div class="dots"><i></i><i></i><i></i></div>
    </div>
    <div class="a" style="left:70px;top:68px"><svg width="19" height="19" viewBox="0 0 19 19" fill="none" stroke="#555" stroke-width="1.5"><path d="M1.5 18.5V1.5H9.5V5H17V13H9.5V9.5H1.5 M9.5 5V9.5"/></svg></div><div class="t tm s" style="left:92px;top:62px">08:00</div><div class="t tm" style="left:92px;top:80px">10:52</div>
    <div class="a hl" style="left:193px;top:58px"></div>
    <div class="a" style="left:265px;top:68px"><svg width="18" height="19" viewBox="0 0 18 19"><path d="M1 18.5V1" stroke="#4a8fd0" stroke-width="1.5"/><rect x="1.5" y="1.5" width="15.5" height="9.5" fill="#4a8fd0"/><g fill="#fff" opacity=".75"><rect x="3" y="3" width="2" height="2"/><rect x="7" y="3" width="2" height="2"/><rect x="11" y="3" width="2" height="2"/><rect x="15" y="3" width="1.5" height="2"/><rect x="5" y="5" width="2" height="2"/><rect x="9" y="5" width="2" height="2"/><rect x="13" y="5" width="2" height="2"/><rect x="3" y="7" width="2" height="2"/><rect x="7" y="7" width="2" height="2"/><rect x="11" y="7" width="2" height="2"/><rect x="15" y="7" width="1.5" height="2"/></g></svg></div><div class="t tm s" style="left:287px;top:62px;color:#4a8fd0">19:06</div><div class="t tm" style="left:287px;top:80px;color:#4a8fd0">16:39</div>
    <div class="a" style="left:441px;top:69px"><svg width="25" height="17" viewBox="0 0 25 17" fill="none" stroke="#444" stroke-width="1.5"><path d="M4.5 1.5H20.5L23.5 15.5H1.5Z" stroke-linejoin="round"/><path d="M12.5 3.5V6.5M12.5 9V12.5"/></svg></div><div class="t kv" style="left:471px;top:70px">13,57 km</div>
    <div class="a" style="left:658px;top:67px"><svg width="15" height="20" viewBox="0 0 15 20" fill="none" stroke="#444" stroke-width="1.5"><path d="M7.5 19C3 13,1.2 10,1.2 7A6.3 6.3 0 0 1 13.8 7C13.8 10,12 13,7.5 19Z"/><circle cx="7.5" cy="7" r="1" fill="#444"/></svg></div><div class="t kv" style="left:683px;top:70px">15</div>
  </div>
  <div class="rc" style="top:457px">
    <div class="rh"><div class="cb"><svg width="22" height="22" viewBox="0 0 22 22" fill="none" stroke="#fff" stroke-width="2.2"><path d="M5 11.5L9 15.5L17.5 6.5"/></svg></div><div class="a" style="left:44px;top:6px"><svg width="30" height="30" viewBox="0 0 30 30" fill="none" stroke="#1a1a1a"><circle cx="15" cy="15" r="10" stroke-width="2.6"/><path d="M15 1.5V5M15 25V28.5M1.5 15H5M25 15H28.5" stroke-width="2.6"/></svg></div><div class="a dotc" style="left:83px;top:9px;background:#3a3af0"></div><div class="t rn" style="left:117px;top:14px">Paul Wagner | 76-UYG-09</div>
      <div class="badge" style="left:457px;top:11px;width:79px">EN COURS</div>
      <div class="prog" style="left:545px"><i class="g" style="width:73px"></i><span style="left:56px">50 %</span></div>
      <div class="dots"><i></i><i></i><i></i></div>
    </div>
    <div class="a" style="left:70px;top:68px"><svg width="19" height="19" viewBox="0 0 19 19" fill="none" stroke="#555" stroke-width="1.5"><path d="M1.5 18.5V1.5H9.5V5H17V13H9.5V9.5H1.5 M9.5 5V9.5"/></svg></div><div class="t tm s" style="left:92px;top:62px">08:00</div><div class="t tm" style="left:92px;top:80px">10:53</div>
    <div class="a hl" style="left:193px;top:58px"></div>
    <div class="a" style="left:265px;top:68px"><svg width="18" height="19" viewBox="0 0 18 19"><path d="M1 18.5V1" stroke="#4a8fd0" stroke-width="1.5"/><rect x="1.5" y="1.5" width="15.5" height="9.5" fill="#4a8fd0"/><g fill="#fff" opacity=".75"><rect x="3" y="3" width="2" height="2"/><rect x="7" y="3" width="2" height="2"/><rect x="11" y="3" width="2" height="2"/><rect x="15" y="3" width="1.5" height="2"/><rect x="5" y="5" width="2" height="2"/><rect x="9" y="5" width="2" height="2"/><rect x="13" y="5" width="2" height="2"/><rect x="3" y="7" width="2" height="2"/><rect x="7" y="7" width="2" height="2"/><rect x="11" y="7" width="2" height="2"/><rect x="15" y="7" width="1.5" height="2"/></g></svg></div><div class="t tm s" style="left:287px;top:62px;color:#4a8fd0">18:15</div><div class="t tm" style="left:287px;top:80px;color:#4a8fd0">16:06</div>
    <div class="a" style="left:441px;top:69px"><svg width="25" height="17" viewBox="0 0 25 17" fill="none" stroke="#444" stroke-width="1.5"><path d="M4.5 1.5H20.5L23.5 15.5H1.5Z" stroke-linejoin="round"/><path d="M12.5 3.5V6.5M12.5 9V12.5"/></svg></div><div class="t kv" style="left:471px;top:70px">13,19 km</div>
    <div class="a" style="left:658px;top:67px"><svg width="15" height="20" viewBox="0 0 15 20" fill="none" stroke="#444" stroke-width="1.5"><path d="M7.5 19C3 13,1.2 10,1.2 7A6.3 6.3 0 0 1 13.8 7C13.8 10,12 13,7.5 19Z"/><circle cx="7.5" cy="7" r="1" fill="#444"/></svg></div><div class="t kv" style="left:683px;top:70px">12</div>
  </div>
  <div class="rc" style="top:578px;height:97px">
    <div class="rh"><div class="a" style="left:44px;top:6px"><svg width="30" height="30" viewBox="0 0 30 30" fill="none" stroke="#1a1a1a"><circle cx="15" cy="15" r="10" stroke-width="2.6"/><path d="M15 1.5V5M15 25V28.5M1.5 15H5M25 15H28.5" stroke-width="2.6"/></svg></div><div class="a dotc" style="left:83px;top:9px;background:#7ddf8c"></div><div class="t rn" style="left:118px;top:14px">Pierre Patel |</div>
      <div class="badge" style="left:652px;top:10px;width:108px;background:#eae7f9;color:#7565d6">NON SOLLICITE</div>
    </div>
    <div class="a" style="left:33px;top:60px"><svg width="19" height="19" viewBox="0 0 19 19" fill="none" stroke="#555" stroke-width="1.5"><path d="M1.5 18.5V1.5H9.5V5H17V13H9.5V9.5H1.5 M9.5 5V9.5"/></svg></div><div class="t kv" style="left:54px;top:63px">-- : --</div>
    <div class="a" style="left:143px;top:60px"><svg width="18" height="19" viewBox="0 0 18 19"><path d="M1 18.5V1" stroke="#444" stroke-width="1.5"/><rect x="1.5" y="1.5" width="15.5" height="9.5" fill="#444"/><g fill="#fff" opacity=".75"><rect x="3" y="3" width="2" height="2"/><rect x="7" y="3" width="2" height="2"/><rect x="11" y="3" width="2" height="2"/><rect x="15" y="3" width="1.5" height="2"/><rect x="5" y="5" width="2" height="2"/><rect x="9" y="5" width="2" height="2"/><rect x="13" y="5" width="2" height="2"/><rect x="3" y="7" width="2" height="2"/><rect x="7" y="7" width="2" height="2"/><rect x="11" y="7" width="2" height="2"/><rect x="15" y="7" width="1.5" height="2"/></g></svg></div><div class="t kv" style="left:164px;top:63px">-- : --</div>
    <div class="a" style="left:245px;top:61px"><svg width="25" height="17" viewBox="0 0 25 17" fill="none" stroke="#444" stroke-width="1.5"><path d="M4.5 1.5H20.5L23.5 15.5H1.5Z" stroke-linejoin="round"/><path d="M12.5 3.5V6.5M12.5 9V12.5"/></svg></div><div class="t kv" style="left:274px;top:63px">0 km</div>
    <div class="a" style="left:371px;top:59px"><svg width="15" height="20" viewBox="0 0 15 20" fill="none" stroke="#444" stroke-width="1.5"><path d="M7.5 19C3 13,1.2 10,1.2 7A6.3 6.3 0 0 1 13.8 7C13.8 10,12 13,7.5 19Z"/><circle cx="7.5" cy="7" r="1" fill="#444"/></svg></div><div class="t kv" style="left:396px;top:63px">0</div>
    <div class="a" style="left:466px;top:60px"><svg width="21" height="17" viewBox="0 0 21 17" fill="none" stroke="#444" stroke-width="1.5"><path d="M3 7L5 2H16L18 7M1.5 7H19.5V13H1.5Z M3 13V16H6V13M15 13V16H18V13 M4 10H6.5M14.5 10H17M8 10.5H13" stroke-linejoin="round"/></svg></div><div class="t kv" style="left:493px;top:63px">0min</div>
    <div class="a" style="left:579px;top:59px"><svg width="17" height="19" viewBox="0 0 17 19" fill="none" stroke="#444" stroke-width="1.5"><circle cx="8.5" cy="6" r="4.5"/><path d="M1.5 18C1.5 13,4.5 11,8.5 11S15.5 13,15.5 18"/></svg></div><div class="t kv" style="left:603px;top:63px">0min</div>
    <div class="a" style="left:690px;top:61px"><svg width="23" height="15" viewBox="0 0 23 15" fill="none" stroke="#444" stroke-width="1.5"><rect x="1" y="1.5" width="21" height="12"/><path d="M11.5 4.5V10.5M10 5.5L11.5 4.5" /><path d="M5 7.5H6M17 7.5H18" stroke-width="2"/></svg></div><div class="t kv" style="left:718px;top:63px">0 €</div>
  </div>
</div>
</body></html>
